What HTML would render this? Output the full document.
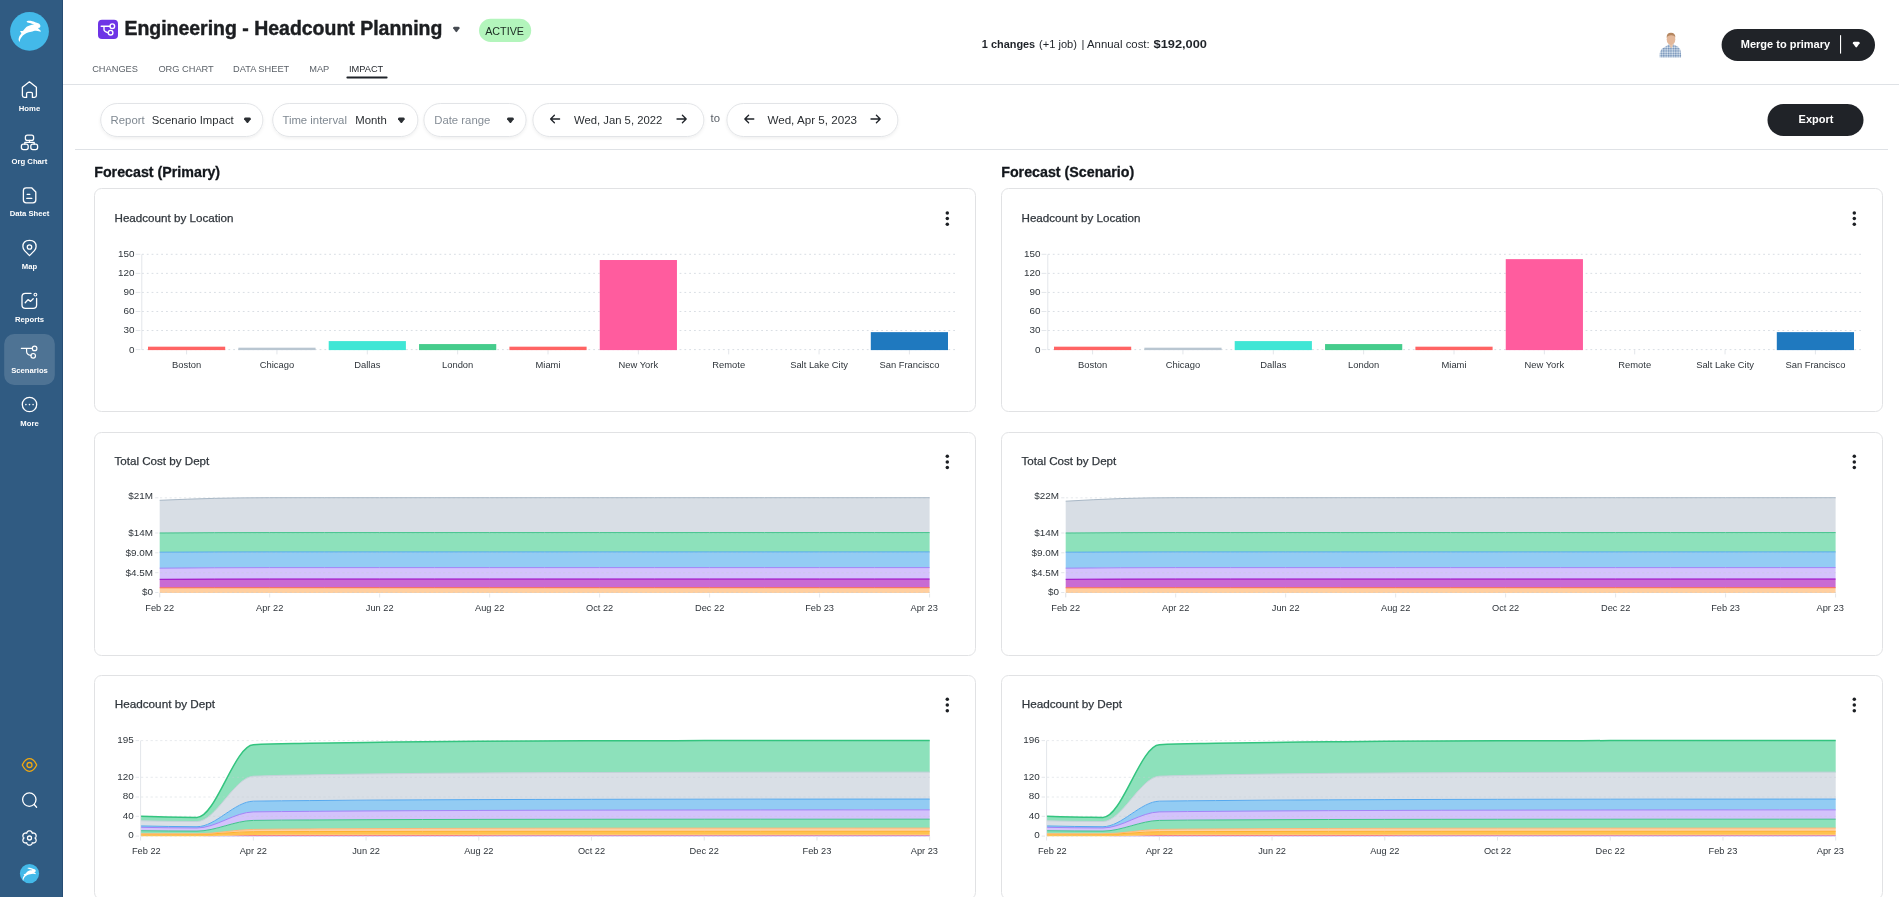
<!DOCTYPE html>
<html><head><meta charset="utf-8">
<style>
*{margin:0;padding:0}
html,body{width:1899px;height:897px;overflow:hidden;background:#fff}
svg{position:absolute;left:0;top:0;display:block;will-change:transform}
text{font-family:"Liberation Sans", sans-serif}
</style></head><body>
<svg width="1899" height="897" viewBox="0 0 1899 897">
<defs>
<filter id="sh" x="-10%" y="-30%" width="120%" height="170%"><feDropShadow dx="0" dy="1.5" stdDeviation="1.5" flood-color="#000" flood-opacity="0.06"/></filter>
</defs>

<rect x="0" y="0" width="63" height="897" fill="#305b82"/>
<rect x="62" y="0" width="1" height="897" fill="#274d74"/>
<circle cx="29.5" cy="31.4" r="19.4" fill="#43b9e9"/>
<path transform="translate(4,8) scale(1.0)" d="M15.19,33.51 C15.01,33.14 14.53,32.25 14.61,31.30 C14.69,30.36 15.19,28.84 15.65,27.83 C16.12,26.81 17.29,25.99 17.39,25.22 C17.49,24.44 15.94,23.60 16.23,23.19 C16.52,22.77 18.07,23.45 19.13,22.72 C20.19,22.00 21.26,19.81 22.61,18.84 C23.96,17.87 25.99,17.34 27.25,16.93 C28.50,16.51 30.84,16.80 30.14,16.35 C29.45,15.89 24.09,14.78 23.07,14.20 C22.06,13.62 23.17,13.03 24.06,12.87 C24.95,12.71 26.96,12.90 28.41,13.22 C29.86,13.54 31.61,14.36 32.75,14.78 C33.89,15.21 34.64,15.29 35.25,15.77 C35.86,16.25 36.31,17.04 36.41,17.68 C36.50,18.32 36.19,19.16 35.83,19.59 C35.46,20.03 34.14,19.86 34.20,20.29 C34.27,20.72 35.77,21.67 36.23,22.20 C36.70,22.73 37.23,23.29 36.99,23.48 C36.74,23.66 35.63,23.43 34.78,23.30 C33.93,23.18 33.14,22.67 31.88,22.72 C30.63,22.78 28.79,23.27 27.25,23.65 C25.70,24.04 24.01,24.40 22.61,25.04 C21.21,25.69 19.86,26.57 18.84,27.54 C17.83,28.50 17.05,29.85 16.52,30.84 C15.99,31.84 15.87,33.06 15.65,33.51 C15.43,33.95 15.36,33.87 15.19,33.51 Z" fill="#fff"/>
<path d="M22.4,87.2 L29.4,81.8 L36.4,87.2 L36.4,95.6 Q36.4,97.4 34.6,97.4 L32.4,97.4 L32.4,93.6 Q32.4,92.4 31.2,92.4 L27.8,92.4 Q26.6,92.4 26.6,93.6 L26.6,97.4 L24.2,97.4 Q22.4,97.4 22.4,95.6 Z" fill="none" stroke="#fff" stroke-width="1.3" stroke-linecap="round" stroke-linejoin="round"/>
<rect x="25.4" y="135.2" width="8.2" height="5.2" rx="2" fill="none" stroke="#fff" stroke-width="1.3" stroke-linecap="round" stroke-linejoin="round"/>
<path d="M29.5,140.4 L29.5,142.4 M25.4,142.4 L33.4,142.4 M24.8,142.4 L24.8,144.2 M34.2,142.4 L34.2,144.2" fill="none" stroke="#fff" stroke-width="1.3" stroke-linecap="round" stroke-linejoin="round"/>
<rect x="21.4" y="144.2" width="6.8" height="5.4" rx="2" fill="none" stroke="#fff" stroke-width="1.3" stroke-linecap="round" stroke-linejoin="round"/>
<rect x="30.8" y="144.2" width="6.8" height="5.4" rx="2" fill="none" stroke="#fff" stroke-width="1.3" stroke-linecap="round" stroke-linejoin="round"/>
<path d="M26.2,187.8 L31.6,187.8 L35.8,192.0 L35.8,200.0 Q35.8,202.8 33.0,202.8 L26.2,202.8 Q23.4,202.8 23.4,200.0 L23.4,190.6 Q23.4,187.8 26.2,187.8 Z" fill="none" stroke="#fff" stroke-width="1.3" stroke-linecap="round" stroke-linejoin="round"/>
<path d="M27.2,194.4 L29.8,194.4 M26.8,198.4 L31.8,198.4" fill="none" stroke="#fff" stroke-width="1.3" stroke-linecap="round" stroke-linejoin="round"/>
<path d="M29.5,255.6 L24.6,250.6 Q22.9,248.8 22.9,246.6 Q22.9,240.4 29.5,240.4 Q36.1,240.4 36.1,246.6 Q36.1,248.8 34.4,250.6 Z" fill="none" stroke="#fff" stroke-width="1.3" stroke-linecap="round" stroke-linejoin="round"/>
<circle cx="29.5" cy="247.0" r="2.2" fill="none" stroke="#fff" stroke-width="1.3" stroke-linecap="round" stroke-linejoin="round"/>
<path d="M31.0,293.4 L25.4,293.4 Q22.0,293.4 22.0,296.8 L22.0,305.0 Q22.0,308.4 25.4,308.4 L33.2,308.4 Q36.6,308.4 36.6,305.0 L36.6,298.4" fill="none" stroke="#fff" stroke-width="1.3" stroke-linecap="round" stroke-linejoin="round"/>
<circle cx="35.4" cy="294.6" r="1.4" fill="none" stroke="#fff" stroke-width="1.1"/>
<path d="M25.2,302.8 L28.0,299.6 L30.6,301.4 L33.2,298.8" fill="none" stroke="#fff" stroke-width="1.3" stroke-linecap="round" stroke-linejoin="round"/>
<rect x="4.2" y="334" width="50.6" height="51" rx="10" fill="#ffffff" fill-opacity="0.15"/>
<path d="M21.4,348.4 L32.2,348.4 M26.6,348.4 L26.6,351.4 Q26.6,354.6 31.0,355.4" fill="none" stroke="#fff" stroke-width="1.2" stroke-linecap="round" stroke-linejoin="round"/>
<circle cx="34.6" cy="348.4" r="2.3" fill="none" stroke="#fff" stroke-width="1.2" stroke-linecap="round" stroke-linejoin="round"/>
<circle cx="33.2" cy="355.8" r="2.3" fill="none" stroke="#fff" stroke-width="1.2" stroke-linecap="round" stroke-linejoin="round"/>
<circle cx="29.5" cy="404.5" r="7.2" fill="none" stroke="#fff" stroke-width="1.3" stroke-linecap="round" stroke-linejoin="round"/>
<circle cx="25.9" cy="404.6" r="0.8" fill="#fff"/>
<circle cx="29.5" cy="404.6" r="0.8" fill="#fff"/>
<circle cx="33.1" cy="404.6" r="0.8" fill="#fff"/>
<text x="29.50" y="111.00" font-size="7.7" fill="#ffffff" font-weight="700" text-anchor="middle" >Home</text>
<text x="29.50" y="163.70" font-size="7.7" fill="#ffffff" font-weight="700" text-anchor="middle" >Org Chart</text>
<text x="29.50" y="215.70" font-size="7.7" fill="#ffffff" font-weight="700" text-anchor="middle" >Data Sheet</text>
<text x="29.50" y="269.00" font-size="7.7" fill="#ffffff" font-weight="700" text-anchor="middle" >Map</text>
<text x="29.50" y="321.70" font-size="7.7" fill="#ffffff" font-weight="700" text-anchor="middle" >Reports</text>
<text x="29.50" y="372.80" font-size="7.7" fill="#ffffff" font-weight="700" text-anchor="middle" >Scenarios</text>
<text x="29.50" y="426.00" font-size="7.7" fill="#ffffff" font-weight="700" text-anchor="middle" >More</text>
<path d="M22.3,765 C24.4,760.6 26.8,758.7 29.5,758.7 C32.2,758.7 34.6,760.6 36.7,765 C34.6,769.4 32.2,771.3 29.5,771.3 C26.8,771.3 24.4,769.4 22.3,765 Z" fill="none" stroke="#f1a80f" stroke-width="1.3" stroke-linejoin="round"/>
<circle cx="29.5" cy="765" r="2.5" fill="none" stroke="#f1a80f" stroke-width="1.3"/>
<circle cx="29.3" cy="799.6" r="6.7" fill="none" stroke="#fff" stroke-width="1.3" stroke-linecap="round" stroke-linejoin="round"/>
<path d="M34.2,804.5 L36.6,807.2" fill="none" stroke="#fff" stroke-width="1.3" stroke-linecap="round" stroke-linejoin="round"/>
<path d="M29.50,830.80 L29.75,830.81 L30.00,830.85 L30.25,830.91 L30.49,830.99 L30.72,831.09 L30.94,831.22 L31.15,831.36 L31.36,831.53 L31.54,831.71 L31.72,831.91 L31.87,832.13 L32.01,832.37 L32.12,832.62 L32.21,832.90 L32.25,833.24 L32.56,833.10 L32.85,833.04 L33.12,833.01 L33.40,833.01 L33.66,833.04 L33.92,833.09 L34.18,833.16 L34.42,833.25 L34.65,833.36 L34.87,833.49 L35.08,833.64 L35.27,833.81 L35.44,833.99 L35.60,834.19 L35.74,834.40 L35.85,834.62 L35.94,834.86 L36.02,835.10 L36.07,835.35 L36.09,835.60 L36.10,835.86 L36.08,836.11 L36.03,836.37 L35.97,836.63 L35.88,836.88 L35.77,837.12 L35.63,837.36 L35.47,837.58 L35.28,837.80 L35.00,838.00 L35.28,838.20 L35.47,838.42 L35.63,838.64 L35.77,838.88 L35.88,839.12 L35.97,839.37 L36.03,839.63 L36.08,839.89 L36.10,840.14 L36.09,840.40 L36.07,840.65 L36.02,840.90 L35.94,841.14 L35.85,841.38 L35.74,841.60 L35.60,841.81 L35.44,842.01 L35.27,842.19 L35.08,842.36 L34.87,842.51 L34.65,842.64 L34.42,842.75 L34.18,842.84 L33.92,842.91 L33.66,842.96 L33.40,842.99 L33.12,842.99 L32.85,842.96 L32.56,842.90 L32.25,842.76 L32.21,843.10 L32.12,843.38 L32.01,843.63 L31.87,843.87 L31.72,844.09 L31.54,844.29 L31.36,844.47 L31.15,844.64 L30.94,844.78 L30.72,844.91 L30.49,845.01 L30.25,845.09 L30.00,845.15 L29.75,845.19 L29.50,845.20 L29.25,845.19 L29.00,845.15 L28.75,845.09 L28.51,845.01 L28.28,844.91 L28.06,844.78 L27.85,844.64 L27.64,844.47 L27.46,844.29 L27.28,844.09 L27.13,843.87 L26.99,843.63 L26.88,843.38 L26.79,843.10 L26.75,842.76 L26.44,842.90 L26.15,842.96 L25.88,842.99 L25.60,842.99 L25.34,842.96 L25.08,842.91 L24.82,842.84 L24.58,842.75 L24.35,842.64 L24.13,842.51 L23.92,842.36 L23.73,842.19 L23.56,842.01 L23.40,841.81 L23.26,841.60 L23.15,841.38 L23.06,841.14 L22.98,840.90 L22.93,840.65 L22.91,840.40 L22.90,840.14 L22.92,839.89 L22.97,839.63 L23.03,839.37 L23.12,839.12 L23.23,838.88 L23.37,838.64 L23.53,838.42 L23.72,838.20 L24.00,838.00 L23.72,837.80 L23.53,837.58 L23.37,837.36 L23.23,837.12 L23.12,836.88 L23.03,836.63 L22.97,836.37 L22.92,836.11 L22.90,835.86 L22.91,835.60 L22.93,835.35 L22.98,835.10 L23.06,834.86 L23.15,834.62 L23.26,834.40 L23.40,834.19 L23.56,833.99 L23.73,833.81 L23.92,833.64 L24.13,833.49 L24.35,833.36 L24.58,833.25 L24.82,833.16 L25.08,833.09 L25.34,833.04 L25.60,833.01 L25.88,833.01 L26.15,833.04 L26.44,833.10 L26.75,833.24 L26.79,832.90 L26.88,832.62 L26.99,832.37 L27.13,832.13 L27.28,831.91 L27.46,831.71 L27.64,831.53 L27.85,831.36 L28.06,831.22 L28.28,831.09 L28.51,830.99 L28.75,830.91 L29.00,830.85 L29.25,830.81 L29.50,830.80 Z" fill="none" stroke="#fff" stroke-width="1.3" stroke-linecap="round" stroke-linejoin="round"/>
<circle cx="29.5" cy="838.0" r="2.0" fill="none" stroke="#fff" stroke-width="1.3" stroke-linecap="round" stroke-linejoin="round"/>
<circle cx="29.5" cy="873.6" r="9.6" fill="#43b9e9"/>
<path transform="translate(13.9,860.1) scale(0.6)" d="M15.19,33.51 C15.01,33.14 14.53,32.25 14.61,31.30 C14.69,30.36 15.19,28.84 15.65,27.83 C16.12,26.81 17.29,25.99 17.39,25.22 C17.49,24.44 15.94,23.60 16.23,23.19 C16.52,22.77 18.07,23.45 19.13,22.72 C20.19,22.00 21.26,19.81 22.61,18.84 C23.96,17.87 25.99,17.34 27.25,16.93 C28.50,16.51 30.84,16.80 30.14,16.35 C29.45,15.89 24.09,14.78 23.07,14.20 C22.06,13.62 23.17,13.03 24.06,12.87 C24.95,12.71 26.96,12.90 28.41,13.22 C29.86,13.54 31.61,14.36 32.75,14.78 C33.89,15.21 34.64,15.29 35.25,15.77 C35.86,16.25 36.31,17.04 36.41,17.68 C36.50,18.32 36.19,19.16 35.83,19.59 C35.46,20.03 34.14,19.86 34.20,20.29 C34.27,20.72 35.77,21.67 36.23,22.20 C36.70,22.73 37.23,23.29 36.99,23.48 C36.74,23.66 35.63,23.43 34.78,23.30 C33.93,23.18 33.14,22.67 31.88,22.72 C30.63,22.78 28.79,23.27 27.25,23.65 C25.70,24.04 24.01,24.40 22.61,25.04 C21.21,25.69 19.86,26.57 18.84,27.54 C17.83,28.50 17.05,29.85 16.52,30.84 C15.99,31.84 15.87,33.06 15.65,33.51 C15.43,33.95 15.36,33.87 15.19,33.51 Z" fill="#fff"/>
<rect x="63" y="84" width="1836" height="1" fill="#dfe2e6"/>
<rect x="98" y="19.8" width="20" height="19.2" rx="4" fill="#6e34e6"/>
<path d="M101.2,26.2 L110.0,26.2 M104.0,26.2 L104.0,29.4 Q104.0,31.4 108.4,32.8" fill="none" stroke="#fff" stroke-width="1.4" stroke-linecap="round" stroke-linejoin="round"/>
<circle cx="112.3" cy="26.2" r="2.3" fill="none" stroke="#fff" stroke-width="1.4" stroke-linecap="round" stroke-linejoin="round"/>
<circle cx="110.6" cy="32.7" r="2.3" fill="none" stroke="#fff" stroke-width="1.4" stroke-linecap="round" stroke-linejoin="round"/>
<text x="124.40" y="35.00" font-size="19.5" fill="#1c1e21" font-weight="700" text-anchor="start" textLength="318" lengthAdjust="spacingAndGlyphs" stroke="#1c1e21" stroke-width="0.45">Engineering - Headcount Planning</text>
<path d="M454.28,26.80 L458.42,26.80 Q460.00,26.80 459.55,28.32 L457.05,31.80 Q456.35,32.60 455.65,31.80 L453.15,28.32 Q452.70,26.80 454.28,26.80 Z" fill="#464b52"/>
<rect x="479" y="18.8" width="52.2" height="23.2" rx="11.6" fill="#b3f5bc"/>
<text x="485.20" y="34.70" font-size="10.75" fill="#1b2a22" font-weight="400" text-anchor="start" >ACTIVE</text>
<text x="92.20" y="72.10" font-size="9.25" fill="#5b6168" font-weight="400" text-anchor="start" >CHANGES</text>
<text x="158.40" y="72.10" font-size="9.25" fill="#5b6168" font-weight="400" text-anchor="start" >ORG CHART</text>
<text x="233.00" y="72.10" font-size="9.25" fill="#5b6168" font-weight="400" text-anchor="start" >DATA SHEET</text>
<text x="309.20" y="72.10" font-size="9.25" fill="#5b6168" font-weight="400" text-anchor="start" >MAP</text>
<text x="349.00" y="72.10" font-size="9.25" fill="#1f2329" font-weight="400" text-anchor="start" >IMPACT</text>
<rect x="346.4" y="76.6" width="41.2" height="1.8" rx="0.9" fill="#1f2329"/>
<text x="981.80" y="47.80" font-size="11" fill="#1f2329" font-weight="700" text-anchor="start" textLength="53.4" lengthAdjust="spacingAndGlyphs">1 changes</text>
<text x="1039.00" y="47.80" font-size="11.2" fill="#1f2329" font-weight="400" text-anchor="start" textLength="38" lengthAdjust="spacingAndGlyphs">(+1 job)</text>
<text x="1081.40" y="47.80" font-size="11.2" fill="#1f2329" font-weight="400" text-anchor="start" >|</text>
<text x="1087.00" y="47.80" font-size="11.2" fill="#1f2329" font-weight="400" text-anchor="start" textLength="62.7" lengthAdjust="spacingAndGlyphs">Annual cost:</text>
<text x="1153.60" y="47.80" font-size="11" fill="#1f2329" font-weight="700" text-anchor="start" textLength="53.4" lengthAdjust="spacingAndGlyphs">$192,000</text>
<defs><pattern id="chk" width="2.4" height="2.4" patternUnits="userSpaceOnUse"><rect width="2.4" height="2.4" fill="#a9bed6"/><rect width="1.2" height="1.2" fill="#6f8db5"/><rect x="1.2" y="1.2" width="1.2" height="1.2" fill="#dfe8f1"/></pattern></defs>
<path d="M1659.6,57.6 Q1659.0,51.0 1662.4,48.6 Q1665.6,46.4 1668.6,44.6 L1673.6,44.6 Q1677.6,46.2 1679.6,48.6 Q1681.4,51.4 1681.0,57.6 Z" fill="url(#chk)"/>
<path d="M1669.2,44.4 L1671.2,48.6 L1673.6,44.6 Z" fill="#e6c3a9"/>
<ellipse cx="1671.0" cy="39.2" rx="4.3" ry="5.9" fill="#e3b89a"/>
<path d="M1666.6,38.0 Q1666.4,32.8 1671.0,32.8 Q1675.4,32.8 1675.4,37.6 Q1674.2,35.0 1671.0,35.2 Q1667.8,35.2 1666.6,38.0 Z" fill="#b4865f"/>
<rect x="1721.6" y="29" width="153.4" height="32" rx="16" fill="#202328"/>
<text x="1740.80" y="48.30" font-size="11" fill="#ffffff" font-weight="700" text-anchor="start" >Merge to primary</text>
<rect x="1840" y="35.2" width="1.1" height="18.4" fill="#ffffff"/>
<path d="M1854.06,41.70 L1858.44,41.70 Q1860.10,41.70 1859.65,43.31 L1856.95,47.10 Q1856.25,47.90 1855.55,47.10 L1852.85,43.31 Q1852.40,41.70 1854.06,41.70 Z" fill="#ffffff"/>
<rect x="100.7" y="103.5" width="162.2" height="33" rx="16.5" fill="#fff" stroke="#e2e4e7" stroke-width="1" filter="url(#sh)"/>
<text x="110.60" y="124.00" font-size="11.35" fill="#7f8891" font-weight="400" text-anchor="start" >Report</text>
<text x="151.80" y="124.00" font-size="11.35" fill="#2b2f33" font-weight="400" text-anchor="start" >Scenario Impact</text>
<path d="M245.32,117.60 L249.58,117.60 Q251.20,117.60 250.75,119.16 L248.15,122.70 Q247.45,123.50 246.75,122.70 L244.15,119.16 Q243.70,117.60 245.32,117.60 Z" fill="#2b2f33"/>
<rect x="272.7" y="103.5" width="145.2" height="33" rx="16.5" fill="#fff" stroke="#e2e4e7" stroke-width="1" filter="url(#sh)"/>
<text x="282.40" y="124.00" font-size="11.35" fill="#7f8891" font-weight="400" text-anchor="start" >Time interval</text>
<text x="355.20" y="124.00" font-size="11.35" fill="#2b2f33" font-weight="400" text-anchor="start" >Month</text>
<path d="M399.22,117.60 L403.48,117.60 Q405.10,117.60 404.65,119.16 L402.05,122.70 Q401.35,123.50 400.65,122.70 L398.05,119.16 Q397.60,117.60 399.22,117.60 Z" fill="#2b2f33"/>
<rect x="423.9" y="103.5" width="102.2" height="33" rx="16.5" fill="#fff" stroke="#e2e4e7" stroke-width="1" filter="url(#sh)"/>
<text x="434.20" y="124.00" font-size="11.35" fill="#858d96" font-weight="400" text-anchor="start" >Date range</text>
<path d="M508.32,117.60 L512.58,117.60 Q514.20,117.60 513.75,119.16 L511.15,122.70 Q510.45,123.50 509.75,122.70 L507.15,119.16 Q506.70,117.60 508.32,117.60 Z" fill="#2b2f33"/>
<rect x="532.9" y="103.5" width="171.0" height="33" rx="16.5" fill="#fff" stroke="#e2e4e7" stroke-width="1" filter="url(#sh)"/>
<path d="M559.6,119.0 L550.6,119.0 M554.4,115.2 L550.6,119.0 L554.4,122.8" fill="none" stroke="#1f2329" stroke-width="1.3" stroke-linecap="round" stroke-linejoin="round"/>
<path d="M677.0,119.0 L686.2,119.0 M682.4,115.2 L686.2,119.0 L682.4,122.8" fill="none" stroke="#1f2329" stroke-width="1.3" stroke-linecap="round" stroke-linejoin="round"/>
<text x="574.00" y="124.00" font-size="11.3" fill="#2b2f33" font-weight="400" text-anchor="start" textLength="88.3" lengthAdjust="spacingAndGlyphs">Wed, Jan 5, 2022</text>
<text x="710.60" y="121.60" font-size="11.3" fill="#5b6168" font-weight="400" text-anchor="start" >to</text>
<rect x="726.9" y="103.5" width="171.0" height="33" rx="16.5" fill="#fff" stroke="#e2e4e7" stroke-width="1" filter="url(#sh)"/>
<path d="M753.8000000000001,119.0 L744.8000000000001,119.0 M748.6,115.2 L744.8000000000001,119.0 L748.6,122.8" fill="none" stroke="#1f2329" stroke-width="1.3" stroke-linecap="round" stroke-linejoin="round"/>
<path d="M871.0,119.0 L880.2,119.0 M876.4,115.2 L880.2,119.0 L876.4,122.8" fill="none" stroke="#1f2329" stroke-width="1.3" stroke-linecap="round" stroke-linejoin="round"/>
<text x="767.40" y="124.00" font-size="11.3" fill="#2b2f33" font-weight="400" text-anchor="start" textLength="89.7" lengthAdjust="spacingAndGlyphs">Wed, Apr 5, 2023</text>
<rect x="1767.5" y="104" width="96" height="32" rx="16" fill="#202328"/>
<text x="1798.60" y="123.40" font-size="11" fill="#ffffff" font-weight="700" text-anchor="start" >Export</text>
<rect x="75" y="149" width="1813" height="1" fill="#dfe2e6"/>
<text x="94.20" y="177.20" font-size="14.26" fill="#13171c" font-weight="700" text-anchor="start" stroke="#13171c" stroke-width="0.3">Forecast (Primary)</text>
<text x="1001.20" y="177.20" font-size="14.26" fill="#13171c" font-weight="700" text-anchor="start" stroke="#13171c" stroke-width="0.3">Forecast (Scenario)</text>
<rect x="94.5" y="188.5" width="881" height="223" rx="7" fill="#fff" stroke="#e1e2e4" stroke-width="1"/>
<text x="114.50" y="222.40" font-size="11.6" fill="#30363c" font-weight="400" text-anchor="start" stroke="#30363c" stroke-width="0.25" textLength="119" lengthAdjust="spacingAndGlyphs">Headcount by Location</text>
<circle cx="947.3" cy="212.90" r="1.75" fill="#1c1f23"/>
<circle cx="947.3" cy="218.60" r="1.75" fill="#1c1f23"/>
<circle cx="947.3" cy="224.30" r="1.75" fill="#1c1f23"/>
<line x1="142" y1="254.31" x2="955" y2="254.31" stroke="#d9dee4" stroke-width="1" stroke-dasharray="1.8,3"/>
<line x1="135.6" y1="254.31" x2="140.4" y2="254.31" stroke="#e3e6ea" stroke-width="1"/>
<text x="134.60" y="257.20" font-size="9.9" fill="#2f353b" font-weight="400" text-anchor="end" >150</text>
<line x1="142" y1="273.36" x2="955" y2="273.36" stroke="#d9dee4" stroke-width="1" stroke-dasharray="1.8,3"/>
<line x1="135.6" y1="273.36" x2="140.4" y2="273.36" stroke="#e3e6ea" stroke-width="1"/>
<text x="134.60" y="276.26" font-size="9.9" fill="#2f353b" font-weight="400" text-anchor="end" >120</text>
<line x1="142" y1="292.42" x2="955" y2="292.42" stroke="#d9dee4" stroke-width="1" stroke-dasharray="1.8,3"/>
<line x1="135.6" y1="292.42" x2="140.4" y2="292.42" stroke="#e3e6ea" stroke-width="1"/>
<text x="134.60" y="295.32" font-size="9.9" fill="#2f353b" font-weight="400" text-anchor="end" >90</text>
<line x1="142" y1="311.48" x2="955" y2="311.48" stroke="#d9dee4" stroke-width="1" stroke-dasharray="1.8,3"/>
<line x1="135.6" y1="311.48" x2="140.4" y2="311.48" stroke="#e3e6ea" stroke-width="1"/>
<text x="134.60" y="314.38" font-size="9.9" fill="#2f353b" font-weight="400" text-anchor="end" >60</text>
<line x1="142" y1="330.54" x2="955" y2="330.54" stroke="#d9dee4" stroke-width="1" stroke-dasharray="1.8,3"/>
<line x1="135.6" y1="330.54" x2="140.4" y2="330.54" stroke="#e3e6ea" stroke-width="1"/>
<text x="134.60" y="333.44" font-size="9.9" fill="#2f353b" font-weight="400" text-anchor="end" >30</text>
<line x1="142" y1="349.60" x2="955" y2="349.60" stroke="#d9dee4" stroke-width="1" stroke-dasharray="1.8,3"/>
<line x1="135.6" y1="349.60" x2="140.4" y2="349.60" stroke="#e3e6ea" stroke-width="1"/>
<text x="134.60" y="352.50" font-size="9.9" fill="#2f353b" font-weight="400" text-anchor="end" >0</text>
<line x1="141.8" y1="254.31" x2="141.8" y2="350.00" stroke="#e3e6ea" stroke-width="1"/>
<line x1="186.60" y1="350.10" x2="186.60" y2="354.40" stroke="#e3e6ea" stroke-width="1"/>
<rect x="148.00" y="346.68" width="77.2" height="3.42" fill="#ff6464"/>
<text x="186.60" y="368.20" font-size="9.4" fill="#2f353b" font-weight="400" text-anchor="middle" >Boston</text>
<line x1="276.95" y1="350.10" x2="276.95" y2="354.40" stroke="#e3e6ea" stroke-width="1"/>
<rect x="238.35" y="347.69" width="77.2" height="2.41" fill="#b9c6d1"/>
<text x="276.95" y="368.20" font-size="9.4" fill="#2f353b" font-weight="400" text-anchor="middle" >Chicago</text>
<line x1="367.30" y1="350.10" x2="367.30" y2="354.40" stroke="#e3e6ea" stroke-width="1"/>
<rect x="328.70" y="341.09" width="77.2" height="9.01" fill="#40e6d5"/>
<text x="367.30" y="368.20" font-size="9.4" fill="#2f353b" font-weight="400" text-anchor="middle" >Dallas</text>
<line x1="457.65" y1="350.10" x2="457.65" y2="354.40" stroke="#e3e6ea" stroke-width="1"/>
<rect x="419.05" y="344.07" width="77.2" height="6.03" fill="#45cc8c"/>
<text x="457.65" y="368.20" font-size="9.4" fill="#2f353b" font-weight="400" text-anchor="middle" >London</text>
<line x1="548.00" y1="350.10" x2="548.00" y2="354.40" stroke="#e3e6ea" stroke-width="1"/>
<rect x="509.40" y="346.68" width="77.2" height="3.42" fill="#ff6464"/>
<text x="548.00" y="368.20" font-size="9.4" fill="#2f353b" font-weight="400" text-anchor="middle" >Miami</text>
<line x1="638.35" y1="350.10" x2="638.35" y2="354.40" stroke="#e3e6ea" stroke-width="1"/>
<rect x="599.75" y="260.02" width="77.2" height="90.08" fill="#ff5c9e"/>
<text x="638.35" y="368.20" font-size="9.4" fill="#2f353b" font-weight="400" text-anchor="middle" >New York</text>
<line x1="728.70" y1="350.10" x2="728.70" y2="354.40" stroke="#e3e6ea" stroke-width="1"/>
<text x="728.70" y="368.20" font-size="9.4" fill="#2f353b" font-weight="400" text-anchor="middle" >Remote</text>
<line x1="819.05" y1="350.10" x2="819.05" y2="354.40" stroke="#e3e6ea" stroke-width="1"/>
<text x="819.05" y="368.20" font-size="9.4" fill="#2f353b" font-weight="400" text-anchor="middle" >Salt Lake City</text>
<line x1="909.40" y1="350.10" x2="909.40" y2="354.40" stroke="#e3e6ea" stroke-width="1"/>
<rect x="870.80" y="332.13" width="77.2" height="17.97" fill="#1f79bf"/>
<text x="909.40" y="368.20" font-size="9.4" fill="#2f353b" font-weight="400" text-anchor="middle" >San Francisco</text>
<rect x="94.5" y="432.5" width="881" height="223" rx="7" fill="#fff" stroke="#e1e2e4" stroke-width="1"/>
<text x="114.50" y="465.40" font-size="11.6" fill="#30363c" font-weight="400" text-anchor="start" stroke="#30363c" stroke-width="0.25" textLength="94.8" lengthAdjust="spacingAndGlyphs">Total Cost by Dept</text>
<circle cx="947.3" cy="456.20" r="1.75" fill="#1c1f23"/>
<circle cx="947.3" cy="461.90" r="1.75" fill="#1c1f23"/>
<circle cx="947.3" cy="467.60" r="1.75" fill="#1c1f23"/>
<path d="M159.70,587.80 C178.03,587.77 196.36,587.74 214.69,587.73 C233.02,587.71 251.35,587.70 269.69,587.70 C288.02,587.70 306.35,587.70 324.68,587.70 C343.01,587.70 361.34,587.70 379.67,587.70 C398.00,587.70 416.33,587.70 434.66,587.70 C453.00,587.70 471.33,587.70 489.66,587.70 C507.99,587.70 526.32,587.70 544.65,587.70 C562.98,587.70 581.31,587.70 599.64,587.70 C617.97,587.70 636.30,587.70 654.64,587.70 C672.97,587.70 691.30,587.70 709.63,587.70 C727.96,587.70 746.29,587.70 764.62,587.70 C782.95,587.70 801.28,587.70 819.61,587.70 C837.95,587.70 856.28,587.70 874.61,587.70 C892.94,587.70 911.27,587.70 929.60,587.70 L929.60,593.00 C911.27,593.00 892.94,593.00 874.61,593.00 C856.28,593.00 837.95,593.00 819.61,593.00 C801.28,593.00 782.95,593.00 764.62,593.00 C746.29,593.00 727.96,593.00 709.63,593.00 C691.30,593.00 672.97,593.00 654.64,593.00 C636.30,593.00 617.97,593.00 599.64,593.00 C581.31,593.00 562.98,593.00 544.65,593.00 C526.32,593.00 507.99,593.00 489.66,593.00 C471.33,593.00 453.00,593.00 434.66,593.00 C416.33,593.00 398.00,593.00 379.67,593.00 C361.34,593.00 343.01,593.00 324.68,593.00 C306.35,593.00 288.02,593.00 269.69,593.00 C251.35,593.00 233.02,593.00 214.69,593.00 C196.36,593.00 178.03,593.00 159.70,593.00 Z" fill="#ffcf9f"/>
<path d="M159.70,579.30 C178.03,579.21 196.36,579.12 214.69,579.08 C233.02,579.03 251.35,579.00 269.69,579.00 C288.02,579.00 306.35,579.00 324.68,579.00 C343.01,579.00 361.34,579.00 379.67,579.00 C398.00,579.00 416.33,579.00 434.66,579.00 C453.00,579.00 471.33,579.00 489.66,579.00 C507.99,579.00 526.32,579.00 544.65,579.00 C562.98,579.00 581.31,579.00 599.64,579.00 C617.97,579.00 636.30,579.00 654.64,579.00 C672.97,579.00 691.30,579.00 709.63,579.00 C727.96,579.00 746.29,579.00 764.62,579.00 C782.95,579.00 801.28,579.00 819.61,579.00 C837.95,579.00 856.28,579.00 874.61,579.00 C892.94,579.00 911.27,579.00 929.60,579.00 L929.60,587.70 C911.27,587.70 892.94,587.70 874.61,587.70 C856.28,587.70 837.95,587.70 819.61,587.70 C801.28,587.70 782.95,587.70 764.62,587.70 C746.29,587.70 727.96,587.70 709.63,587.70 C691.30,587.70 672.97,587.70 654.64,587.70 C636.30,587.70 617.97,587.70 599.64,587.70 C581.31,587.70 562.98,587.70 544.65,587.70 C526.32,587.70 507.99,587.70 489.66,587.70 C471.33,587.70 453.00,587.70 434.66,587.70 C416.33,587.70 398.00,587.70 379.67,587.70 C361.34,587.70 343.01,587.70 324.68,587.70 C306.35,587.70 288.02,587.70 269.69,587.70 C251.35,587.70 233.02,587.71 214.69,587.73 C196.36,587.74 178.03,587.77 159.70,587.80 Z" fill="#c96bd2"/>
<path d="M159.70,568.20 C178.03,568.03 196.36,567.85 214.69,567.75 C233.02,567.65 251.35,567.60 269.69,567.60 C288.02,567.60 306.35,567.60 324.68,567.60 C343.01,567.60 361.34,567.60 379.67,567.60 C398.00,567.60 416.33,567.60 434.66,567.60 C453.00,567.60 471.33,567.60 489.66,567.60 C507.99,567.60 526.32,567.60 544.65,567.60 C562.98,567.60 581.31,567.60 599.64,567.60 C617.97,567.60 636.30,567.60 654.64,567.60 C672.97,567.60 691.30,567.60 709.63,567.60 C727.96,567.60 746.29,567.60 764.62,567.60 C782.95,567.60 801.28,567.60 819.61,567.60 C837.95,567.60 856.28,567.60 874.61,567.60 C892.94,567.60 911.27,567.60 929.60,567.60 L929.60,579.00 C911.27,579.00 892.94,579.00 874.61,579.00 C856.28,579.00 837.95,579.00 819.61,579.00 C801.28,579.00 782.95,579.00 764.62,579.00 C746.29,579.00 727.96,579.00 709.63,579.00 C691.30,579.00 672.97,579.00 654.64,579.00 C636.30,579.00 617.97,579.00 599.64,579.00 C581.31,579.00 562.98,579.00 544.65,579.00 C526.32,579.00 507.99,579.00 489.66,579.00 C471.33,579.00 453.00,579.00 434.66,579.00 C416.33,579.00 398.00,579.00 379.67,579.00 C361.34,579.00 343.01,579.00 324.68,579.00 C306.35,579.00 288.02,579.00 269.69,579.00 C251.35,579.00 233.02,579.03 214.69,579.08 C196.36,579.12 178.03,579.21 159.70,579.30 Z" fill="#d4c2fc"/>
<path d="M159.70,552.20 C178.03,552.11 196.36,552.02 214.69,551.97 C233.02,551.92 251.35,551.90 269.69,551.90 C288.02,551.90 306.35,551.90 324.68,551.90 C343.01,551.90 361.34,551.90 379.67,551.90 C398.00,551.90 416.33,551.90 434.66,551.90 C453.00,551.90 471.33,551.90 489.66,551.90 C507.99,551.90 526.32,551.90 544.65,551.90 C562.98,551.90 581.31,551.90 599.64,551.90 C617.97,551.90 636.30,551.90 654.64,551.90 C672.97,551.90 691.30,551.90 709.63,551.90 C727.96,551.90 746.29,551.90 764.62,551.90 C782.95,551.90 801.28,551.90 819.61,551.90 C837.95,551.90 856.28,551.90 874.61,551.90 C892.94,551.90 911.27,551.90 929.60,551.90 L929.60,567.60 C911.27,567.60 892.94,567.60 874.61,567.60 C856.28,567.60 837.95,567.60 819.61,567.60 C801.28,567.60 782.95,567.60 764.62,567.60 C746.29,567.60 727.96,567.60 709.63,567.60 C691.30,567.60 672.97,567.60 654.64,567.60 C636.30,567.60 617.97,567.60 599.64,567.60 C581.31,567.60 562.98,567.60 544.65,567.60 C526.32,567.60 507.99,567.60 489.66,567.60 C471.33,567.60 453.00,567.60 434.66,567.60 C416.33,567.60 398.00,567.60 379.67,567.60 C361.34,567.60 343.01,567.60 324.68,567.60 C306.35,567.60 288.02,567.60 269.69,567.60 C251.35,567.60 233.02,567.65 214.69,567.75 C196.36,567.85 178.03,568.03 159.70,568.20 Z" fill="#93ccf4"/>
<path d="M159.70,533.00 C178.03,532.88 196.36,532.77 214.69,532.70 C233.02,532.63 251.35,532.60 269.69,532.60 C288.02,532.60 306.35,532.60 324.68,532.60 C343.01,532.60 361.34,532.60 379.67,532.60 C398.00,532.60 416.33,532.60 434.66,532.60 C453.00,532.60 471.33,532.60 489.66,532.60 C507.99,532.60 526.32,532.60 544.65,532.60 C562.98,532.60 581.31,532.60 599.64,532.60 C617.97,532.60 636.30,532.60 654.64,532.60 C672.97,532.60 691.30,532.60 709.63,532.60 C727.96,532.60 746.29,532.60 764.62,532.60 C782.95,532.60 801.28,532.60 819.61,532.60 C837.95,532.60 856.28,532.60 874.61,532.60 C892.94,532.60 911.27,532.60 929.60,532.60 L929.60,551.90 C911.27,551.90 892.94,551.90 874.61,551.90 C856.28,551.90 837.95,551.90 819.61,551.90 C801.28,551.90 782.95,551.90 764.62,551.90 C746.29,551.90 727.96,551.90 709.63,551.90 C691.30,551.90 672.97,551.90 654.64,551.90 C636.30,551.90 617.97,551.90 599.64,551.90 C581.31,551.90 562.98,551.90 544.65,551.90 C526.32,551.90 507.99,551.90 489.66,551.90 C471.33,551.90 453.00,551.90 434.66,551.90 C416.33,551.90 398.00,551.90 379.67,551.90 C361.34,551.90 343.01,551.90 324.68,551.90 C306.35,551.90 288.02,551.90 269.69,551.90 C251.35,551.90 233.02,551.92 214.69,551.97 C196.36,552.02 178.03,552.11 159.70,552.20 Z" fill="#8de1bb"/>
<path d="M159.70,500.30 C178.03,499.54 196.36,498.78 214.69,498.35 C233.02,497.92 251.35,497.70 269.69,497.70 C288.02,497.70 306.35,497.70 324.68,497.70 C343.01,497.70 361.34,497.70 379.67,497.70 C398.00,497.70 416.33,497.70 434.66,497.70 C453.00,497.70 471.33,497.70 489.66,497.70 C507.99,497.70 526.32,497.70 544.65,497.70 C562.98,497.70 581.31,497.70 599.64,497.70 C617.97,497.70 636.30,497.70 654.64,497.70 C672.97,497.70 691.30,497.70 709.63,497.70 C727.96,497.70 746.29,497.70 764.62,497.70 C782.95,497.70 801.28,497.70 819.61,497.70 C837.95,497.70 856.28,497.70 874.61,497.70 C892.94,497.70 911.27,497.70 929.60,497.70 L929.60,532.60 C911.27,532.60 892.94,532.60 874.61,532.60 C856.28,532.60 837.95,532.60 819.61,532.60 C801.28,532.60 782.95,532.60 764.62,532.60 C746.29,532.60 727.96,532.60 709.63,532.60 C691.30,532.60 672.97,532.60 654.64,532.60 C636.30,532.60 617.97,532.60 599.64,532.60 C581.31,532.60 562.98,532.60 544.65,532.60 C526.32,532.60 507.99,532.60 489.66,532.60 C471.33,532.60 453.00,532.60 434.66,532.60 C416.33,532.60 398.00,532.60 379.67,532.60 C361.34,532.60 343.01,532.60 324.68,532.60 C306.35,532.60 288.02,532.60 269.69,532.60 C251.35,532.60 233.02,532.63 214.69,532.70 C196.36,532.77 178.03,532.88 159.70,533.00 Z" fill="#d8dee5"/>
<line x1="160" y1="497.80" x2="930" y2="497.80" stroke="#c5ccd4" stroke-opacity="0.42" stroke-width="1" stroke-dasharray="2.2,2.6"/>
<line x1="160" y1="533.00" x2="930" y2="533.00" stroke="#c5ccd4" stroke-opacity="0.42" stroke-width="1" stroke-dasharray="2.2,2.6"/>
<line x1="160" y1="552.80" x2="930" y2="552.80" stroke="#c5ccd4" stroke-opacity="0.42" stroke-width="1" stroke-dasharray="2.2,2.6"/>
<line x1="160" y1="572.70" x2="930" y2="572.70" stroke="#c5ccd4" stroke-opacity="0.42" stroke-width="1" stroke-dasharray="2.2,2.6"/>
<line x1="160" y1="592.50" x2="930" y2="592.50" stroke="#c5ccd4" stroke-opacity="0.42" stroke-width="1" stroke-dasharray="2.2,2.6"/>
<path d="M159.70,587.80 C178.03,587.77 196.36,587.74 214.69,587.73 C233.02,587.71 251.35,587.70 269.69,587.70 C288.02,587.70 306.35,587.70 324.68,587.70 C343.01,587.70 361.34,587.70 379.67,587.70 C398.00,587.70 416.33,587.70 434.66,587.70 C453.00,587.70 471.33,587.70 489.66,587.70 C507.99,587.70 526.32,587.70 544.65,587.70 C562.98,587.70 581.31,587.70 599.64,587.70 C617.97,587.70 636.30,587.70 654.64,587.70 C672.97,587.70 691.30,587.70 709.63,587.70 C727.96,587.70 746.29,587.70 764.62,587.70 C782.95,587.70 801.28,587.70 819.61,587.70 C837.95,587.70 856.28,587.70 874.61,587.70 C892.94,587.70 911.27,587.70 929.60,587.70" fill="none" stroke="#ff6d4d" stroke-width="1"/>
<path d="M159.70,579.30 C178.03,579.21 196.36,579.12 214.69,579.08 C233.02,579.03 251.35,579.00 269.69,579.00 C288.02,579.00 306.35,579.00 324.68,579.00 C343.01,579.00 361.34,579.00 379.67,579.00 C398.00,579.00 416.33,579.00 434.66,579.00 C453.00,579.00 471.33,579.00 489.66,579.00 C507.99,579.00 526.32,579.00 544.65,579.00 C562.98,579.00 581.31,579.00 599.64,579.00 C617.97,579.00 636.30,579.00 654.64,579.00 C672.97,579.00 691.30,579.00 709.63,579.00 C727.96,579.00 746.29,579.00 764.62,579.00 C782.95,579.00 801.28,579.00 819.61,579.00 C837.95,579.00 856.28,579.00 874.61,579.00 C892.94,579.00 911.27,579.00 929.60,579.00" fill="none" stroke="#9800c6" stroke-width="1"/>
<path d="M159.70,568.20 C178.03,568.03 196.36,567.85 214.69,567.75 C233.02,567.65 251.35,567.60 269.69,567.60 C288.02,567.60 306.35,567.60 324.68,567.60 C343.01,567.60 361.34,567.60 379.67,567.60 C398.00,567.60 416.33,567.60 434.66,567.60 C453.00,567.60 471.33,567.60 489.66,567.60 C507.99,567.60 526.32,567.60 544.65,567.60 C562.98,567.60 581.31,567.60 599.64,567.60 C617.97,567.60 636.30,567.60 654.64,567.60 C672.97,567.60 691.30,567.60 709.63,567.60 C727.96,567.60 746.29,567.60 764.62,567.60 C782.95,567.60 801.28,567.60 819.61,567.60 C837.95,567.60 856.28,567.60 874.61,567.60 C892.94,567.60 911.27,567.60 929.60,567.60" fill="none" stroke="#a284f7" stroke-width="1"/>
<path d="M159.70,552.20 C178.03,552.11 196.36,552.02 214.69,551.97 C233.02,551.92 251.35,551.90 269.69,551.90 C288.02,551.90 306.35,551.90 324.68,551.90 C343.01,551.90 361.34,551.90 379.67,551.90 C398.00,551.90 416.33,551.90 434.66,551.90 C453.00,551.90 471.33,551.90 489.66,551.90 C507.99,551.90 526.32,551.90 544.65,551.90 C562.98,551.90 581.31,551.90 599.64,551.90 C617.97,551.90 636.30,551.90 654.64,551.90 C672.97,551.90 691.30,551.90 709.63,551.90 C727.96,551.90 746.29,551.90 764.62,551.90 C782.95,551.90 801.28,551.90 819.61,551.90 C837.95,551.90 856.28,551.90 874.61,551.90 C892.94,551.90 911.27,551.90 929.60,551.90" fill="none" stroke="#58abf0" stroke-width="1"/>
<path d="M159.70,533.00 C178.03,532.88 196.36,532.77 214.69,532.70 C233.02,532.63 251.35,532.60 269.69,532.60 C288.02,532.60 306.35,532.60 324.68,532.60 C343.01,532.60 361.34,532.60 379.67,532.60 C398.00,532.60 416.33,532.60 434.66,532.60 C453.00,532.60 471.33,532.60 489.66,532.60 C507.99,532.60 526.32,532.60 544.65,532.60 C562.98,532.60 581.31,532.60 599.64,532.60 C617.97,532.60 636.30,532.60 654.64,532.60 C672.97,532.60 691.30,532.60 709.63,532.60 C727.96,532.60 746.29,532.60 764.62,532.60 C782.95,532.60 801.28,532.60 819.61,532.60 C837.95,532.60 856.28,532.60 874.61,532.60 C892.94,532.60 911.27,532.60 929.60,532.60" fill="none" stroke="#3fc38a" stroke-width="1"/>
<path d="M159.70,500.30 C178.03,499.54 196.36,498.78 214.69,498.35 C233.02,497.92 251.35,497.70 269.69,497.70 C288.02,497.70 306.35,497.70 324.68,497.70 C343.01,497.70 361.34,497.70 379.67,497.70 C398.00,497.70 416.33,497.70 434.66,497.70 C453.00,497.70 471.33,497.70 489.66,497.70 C507.99,497.70 526.32,497.70 544.65,497.70 C562.98,497.70 581.31,497.70 599.64,497.70 C617.97,497.70 636.30,497.70 654.64,497.70 C672.97,497.70 691.30,497.70 709.63,497.70 C727.96,497.70 746.29,497.70 764.62,497.70 C782.95,497.70 801.28,497.70 819.61,497.70 C837.95,497.70 856.28,497.70 874.61,497.70 C892.94,497.70 911.27,497.70 929.60,497.70" fill="none" stroke="#a9b8c6" stroke-width="1"/>
<line x1="155.2" y1="497.80" x2="158.4" y2="497.80" stroke="#e3e6ea" stroke-width="1"/>
<text x="153.00" y="499.40" font-size="9.9" fill="#2f353b" font-weight="400" text-anchor="end" >$21M</text>
<line x1="155.2" y1="533.00" x2="158.4" y2="533.00" stroke="#e3e6ea" stroke-width="1"/>
<text x="153.00" y="535.80" font-size="9.9" fill="#2f353b" font-weight="400" text-anchor="end" >$14M</text>
<line x1="155.2" y1="552.80" x2="158.4" y2="552.80" stroke="#e3e6ea" stroke-width="1"/>
<text x="153.00" y="555.60" font-size="9.9" fill="#2f353b" font-weight="400" text-anchor="end" >$9.0M</text>
<line x1="155.2" y1="572.70" x2="158.4" y2="572.70" stroke="#e3e6ea" stroke-width="1"/>
<text x="153.00" y="575.50" font-size="9.9" fill="#2f353b" font-weight="400" text-anchor="end" >$4.5M</text>
<line x1="155.2" y1="592.50" x2="158.4" y2="592.50" stroke="#e3e6ea" stroke-width="1"/>
<text x="153.00" y="595.30" font-size="9.9" fill="#2f353b" font-weight="400" text-anchor="end" >$0</text>
<line x1="159.70" y1="593" x2="159.70" y2="597" stroke="#e3e6ea" stroke-width="1"/>
<line x1="159.70" y1="593.5" x2="159.70" y2="597.5" stroke="#e3e6ea" stroke-width="1"/>
<text x="159.70" y="610.60" font-size="9.25" fill="#2f353b" font-weight="400" text-anchor="middle" >Feb 22</text>
<line x1="269.69" y1="593.5" x2="269.69" y2="597.5" stroke="#e3e6ea" stroke-width="1"/>
<text x="269.69" y="610.60" font-size="9.25" fill="#2f353b" font-weight="400" text-anchor="middle" >Apr 22</text>
<line x1="379.67" y1="593.5" x2="379.67" y2="597.5" stroke="#e3e6ea" stroke-width="1"/>
<text x="379.67" y="610.60" font-size="9.25" fill="#2f353b" font-weight="400" text-anchor="middle" >Jun 22</text>
<line x1="489.66" y1="593.5" x2="489.66" y2="597.5" stroke="#e3e6ea" stroke-width="1"/>
<text x="489.66" y="610.60" font-size="9.25" fill="#2f353b" font-weight="400" text-anchor="middle" >Aug 22</text>
<line x1="599.64" y1="593.5" x2="599.64" y2="597.5" stroke="#e3e6ea" stroke-width="1"/>
<text x="599.64" y="610.60" font-size="9.25" fill="#2f353b" font-weight="400" text-anchor="middle" >Oct 22</text>
<line x1="709.63" y1="593.5" x2="709.63" y2="597.5" stroke="#e3e6ea" stroke-width="1"/>
<text x="709.63" y="610.60" font-size="9.25" fill="#2f353b" font-weight="400" text-anchor="middle" >Dec 22</text>
<line x1="819.61" y1="593.5" x2="819.61" y2="597.5" stroke="#e3e6ea" stroke-width="1"/>
<text x="819.61" y="610.60" font-size="9.25" fill="#2f353b" font-weight="400" text-anchor="middle" >Feb 23</text>
<line x1="929.60" y1="593.5" x2="929.60" y2="597.5" stroke="#e3e6ea" stroke-width="1"/>
<text x="937.80" y="610.60" font-size="9.25" fill="#2f353b" font-weight="400" text-anchor="end" >Apr 23</text>
<rect x="94.5" y="675.5" width="881" height="224" rx="7" fill="#fff" stroke="#e1e2e4" stroke-width="1"/>
<text x="114.70" y="708.00" font-size="11.6" fill="#30363c" font-weight="400" text-anchor="start" stroke="#30363c" stroke-width="0.25" textLength="100.4" lengthAdjust="spacingAndGlyphs">Headcount by Dept</text>
<circle cx="947.3" cy="699.30" r="1.75" fill="#1c1f23"/>
<circle cx="947.3" cy="705.00" r="1.75" fill="#1c1f23"/>
<circle cx="947.3" cy="710.70" r="1.75" fill="#1c1f23"/>
<path d="M140.60,836.20 C159.39,836.20 178.18,836.20 196.96,836.20 C215.75,836.20 234.54,835.73 253.33,835.71 C272.12,835.69 290.90,835.69 309.69,835.68 C328.48,835.67 347.27,835.66 366.06,835.65 C384.85,835.65 403.63,835.64 422.42,835.64 C441.21,835.64 460.00,835.63 478.79,835.63 C497.57,835.63 516.36,835.63 535.15,835.62 C553.94,835.62 572.73,835.62 591.51,835.62 C610.30,835.62 629.09,835.62 647.88,835.62 C666.67,835.62 685.45,835.62 704.24,835.62 C723.03,835.62 741.82,835.62 760.61,835.61 C779.40,835.61 798.18,835.61 816.97,835.61 C835.76,835.61 854.55,835.61 873.34,835.61 C892.12,835.61 910.91,835.61 929.70,835.61 L929.70,836.20 C910.91,836.20 892.12,836.20 873.34,836.20 C854.55,836.20 835.76,836.20 816.97,836.20 C798.18,836.20 779.40,836.20 760.61,836.20 C741.82,836.20 723.03,836.20 704.24,836.20 C685.45,836.20 666.67,836.20 647.88,836.20 C629.09,836.20 610.30,836.20 591.51,836.20 C572.73,836.20 553.94,836.20 535.15,836.20 C516.36,836.20 497.57,836.20 478.79,836.20 C460.00,836.20 441.21,836.20 422.42,836.20 C403.63,836.20 384.85,836.20 366.06,836.20 C347.27,836.20 328.48,836.20 309.69,836.20 C290.90,836.20 272.12,836.20 253.33,836.20 C234.54,836.20 215.75,836.20 196.96,836.20 C178.18,836.20 159.39,836.20 140.60,836.20 Z" fill="#8f73f5"/>
<path d="M140.60,836.20 C159.39,836.20 178.18,836.20 196.96,836.20 C215.75,836.20 234.54,834.94 253.33,834.88 C272.12,834.82 290.90,834.82 309.69,834.79 C328.48,834.77 347.27,834.75 366.06,834.74 C384.85,834.72 403.63,834.71 422.42,834.70 C441.21,834.69 460.00,834.68 478.79,834.68 C497.57,834.67 516.36,834.67 535.15,834.66 C553.94,834.66 572.73,834.66 591.51,834.65 C610.30,834.65 629.09,834.65 647.88,834.65 C666.67,834.64 685.45,834.64 704.24,834.64 C723.03,834.64 741.82,834.64 760.61,834.64 C779.40,834.64 798.18,834.64 816.97,834.64 C835.76,834.64 854.55,834.64 873.34,834.64 C892.12,834.64 910.91,834.64 929.70,834.64 L929.70,835.61 C910.91,835.61 892.12,835.61 873.34,835.61 C854.55,835.61 835.76,835.61 816.97,835.61 C798.18,835.61 779.40,835.61 760.61,835.61 C741.82,835.62 723.03,835.62 704.24,835.62 C685.45,835.62 666.67,835.62 647.88,835.62 C629.09,835.62 610.30,835.62 591.51,835.62 C572.73,835.62 553.94,835.62 535.15,835.62 C516.36,835.63 497.57,835.63 478.79,835.63 C460.00,835.63 441.21,835.64 422.42,835.64 C403.63,835.64 384.85,835.65 366.06,835.65 C347.27,835.66 328.48,835.67 309.69,835.68 C290.90,835.69 272.12,835.69 253.33,835.71 C234.54,835.73 215.75,836.20 196.96,836.20 C178.18,836.20 159.39,836.20 140.60,836.20 Z" fill="#ff5f5f"/>
<path d="M140.60,834.15 C159.39,834.24 178.18,834.34 196.96,834.34 C215.75,834.34 234.54,831.79 253.33,831.70 C272.12,831.61 290.90,831.60 309.69,831.56 C328.48,831.52 347.27,831.50 366.06,831.47 C384.85,831.45 403.63,831.43 422.42,831.42 C441.21,831.40 460.00,831.39 478.79,831.38 C497.57,831.37 516.36,831.36 535.15,831.35 C553.94,831.35 572.73,831.34 591.51,831.34 C610.30,831.33 629.09,831.33 647.88,831.33 C666.67,831.32 685.45,831.32 704.24,831.32 C723.03,831.32 741.82,831.32 760.61,831.32 C779.40,831.31 798.18,831.31 816.97,831.31 C835.76,831.31 854.55,831.31 873.34,831.31 C892.12,831.31 910.91,831.31 929.70,831.31 L929.70,834.64 C910.91,834.64 892.12,834.64 873.34,834.64 C854.55,834.64 835.76,834.64 816.97,834.64 C798.18,834.64 779.40,834.64 760.61,834.64 C741.82,834.64 723.03,834.64 704.24,834.64 C685.45,834.64 666.67,834.64 647.88,834.65 C629.09,834.65 610.30,834.65 591.51,834.65 C572.73,834.66 553.94,834.66 535.15,834.66 C516.36,834.67 497.57,834.67 478.79,834.68 C460.00,834.68 441.21,834.69 422.42,834.70 C403.63,834.71 384.85,834.72 366.06,834.74 C347.27,834.75 328.48,834.77 309.69,834.79 C290.90,834.82 272.12,834.82 253.33,834.88 C234.54,834.94 215.75,836.20 196.96,836.20 C178.18,836.20 159.39,836.20 140.60,836.20 Z" fill="#ffc24f"/>
<path d="M140.60,833.80 C159.39,833.80 178.18,833.80 196.96,833.80 C215.75,833.80 234.54,829.71 253.33,829.40 C272.12,829.09 290.90,829.06 309.69,828.94 C328.48,828.81 347.27,828.72 366.06,828.64 C384.85,828.55 403.63,828.50 422.42,828.44 C441.21,828.39 460.00,828.35 478.79,828.32 C497.57,828.28 516.36,828.26 535.15,828.23 C553.94,828.21 572.73,828.19 591.51,828.18 C610.30,828.16 629.09,828.15 647.88,828.14 C666.67,828.13 685.45,828.13 704.24,828.12 C723.03,828.12 741.82,828.11 760.61,828.11 C779.40,828.10 798.18,828.10 816.97,828.10 C835.76,828.09 854.55,828.09 873.34,828.09 C892.12,828.09 910.91,828.09 929.70,828.09 L929.70,831.31 C910.91,831.31 892.12,831.31 873.34,831.31 C854.55,831.31 835.76,831.31 816.97,831.31 C798.18,831.31 779.40,831.31 760.61,831.32 C741.82,831.32 723.03,831.32 704.24,831.32 C685.45,831.32 666.67,831.32 647.88,831.33 C629.09,831.33 610.30,831.33 591.51,831.34 C572.73,831.34 553.94,831.35 535.15,831.35 C516.36,831.36 497.57,831.37 478.79,831.38 C460.00,831.39 441.21,831.40 422.42,831.42 C403.63,831.43 384.85,831.45 366.06,831.47 C347.27,831.50 328.48,831.52 309.69,831.56 C290.90,831.60 272.12,831.61 253.33,831.70 C234.54,831.79 215.75,834.34 196.96,834.34 C178.18,834.34 159.39,834.24 140.60,834.15 Z" fill="#ffd0a2"/>
<path d="M140.60,830.72 C159.39,830.92 178.18,831.11 196.96,831.11 C215.75,831.11 234.54,820.68 253.33,820.40 C272.12,820.11 290.90,820.09 309.69,819.97 C328.48,819.85 347.27,819.77 366.06,819.69 C384.85,819.62 403.63,819.56 422.42,819.51 C441.21,819.46 460.00,819.43 478.79,819.39 C497.57,819.36 516.36,819.34 535.15,819.32 C553.94,819.30 572.73,819.28 591.51,819.27 C610.30,819.25 629.09,819.24 647.88,819.24 C666.67,819.23 685.45,819.22 704.24,819.21 C723.03,819.21 741.82,819.20 760.61,819.20 C779.40,819.20 798.18,819.19 816.97,819.19 C835.76,819.19 854.55,819.19 873.34,819.19 C892.12,819.18 910.91,819.18 929.70,819.18 L929.70,828.09 C910.91,828.09 892.12,828.09 873.34,828.09 C854.55,828.09 835.76,828.09 816.97,828.10 C798.18,828.10 779.40,828.10 760.61,828.11 C741.82,828.11 723.03,828.12 704.24,828.12 C685.45,828.13 666.67,828.13 647.88,828.14 C629.09,828.15 610.30,828.16 591.51,828.18 C572.73,828.19 553.94,828.21 535.15,828.23 C516.36,828.26 497.57,828.28 478.79,828.32 C460.00,828.35 441.21,828.39 422.42,828.44 C403.63,828.50 384.85,828.55 366.06,828.64 C347.27,828.72 328.48,828.81 309.69,828.94 C290.90,829.06 272.12,829.09 253.33,829.40 C234.54,829.71 215.75,833.80 196.96,833.80 C178.18,833.80 159.39,833.80 140.60,833.80 Z" fill="#8de1bb"/>
<path d="M140.60,827.30 C159.39,827.64 178.18,827.98 196.96,827.98 C215.75,827.98 234.54,812.24 253.33,811.89 C272.12,811.54 290.90,811.51 309.69,811.36 C328.48,811.21 347.27,811.08 366.06,810.97 C384.85,810.85 403.63,810.76 422.42,810.67 C441.21,810.58 460.00,810.51 478.79,810.45 C497.57,810.38 516.36,810.33 535.15,810.28 C553.94,810.23 572.73,810.19 591.51,810.16 C610.30,810.12 629.09,810.09 647.88,810.06 C666.67,810.04 685.45,810.01 704.24,809.99 C723.03,809.97 741.82,809.96 760.61,809.94 C779.40,809.93 798.18,809.91 816.97,809.90 C835.76,809.89 854.55,809.88 873.34,809.87 C892.12,809.86 910.91,809.86 929.70,809.85 L929.70,819.18 C910.91,819.18 892.12,819.18 873.34,819.19 C854.55,819.19 835.76,819.19 816.97,819.19 C798.18,819.19 779.40,819.20 760.61,819.20 C741.82,819.20 723.03,819.21 704.24,819.21 C685.45,819.22 666.67,819.23 647.88,819.24 C629.09,819.24 610.30,819.25 591.51,819.27 C572.73,819.28 553.94,819.30 535.15,819.32 C516.36,819.34 497.57,819.36 478.79,819.39 C460.00,819.43 441.21,819.46 422.42,819.51 C403.63,819.56 384.85,819.62 366.06,819.69 C347.27,819.77 328.48,819.85 309.69,819.97 C290.90,820.09 272.12,820.11 253.33,820.40 C234.54,820.68 215.75,831.11 196.96,831.11 C178.18,831.11 159.39,830.92 140.60,830.72 Z" fill="#d3c2fb"/>
<path d="M140.60,825.93 C159.39,826.32 178.18,826.71 196.96,826.71 C215.75,826.71 234.54,801.58 253.33,801.17 C272.12,800.77 290.90,800.74 309.69,800.57 C328.48,800.40 347.27,800.26 366.06,800.14 C384.85,800.01 403.63,799.91 422.42,799.82 C441.21,799.73 460.00,799.66 478.79,799.60 C497.57,799.53 516.36,799.48 535.15,799.44 C553.94,799.39 572.73,799.35 591.51,799.32 C610.30,799.29 629.09,799.26 647.88,799.24 C666.67,799.21 685.45,799.19 704.24,799.18 C723.03,799.16 741.82,799.15 760.61,799.13 C779.40,799.12 798.18,799.11 816.97,799.10 C835.76,799.09 854.55,799.09 873.34,799.08 C892.12,799.07 910.91,799.07 929.70,799.06 L929.70,809.85 C910.91,809.86 892.12,809.86 873.34,809.87 C854.55,809.88 835.76,809.89 816.97,809.90 C798.18,809.91 779.40,809.93 760.61,809.94 C741.82,809.96 723.03,809.97 704.24,809.99 C685.45,810.01 666.67,810.04 647.88,810.06 C629.09,810.09 610.30,810.12 591.51,810.16 C572.73,810.19 553.94,810.23 535.15,810.28 C516.36,810.33 497.57,810.38 478.79,810.45 C460.00,810.51 441.21,810.58 422.42,810.67 C403.63,810.76 384.85,810.85 366.06,810.97 C347.27,811.08 328.48,811.21 309.69,811.36 C290.90,811.51 272.12,811.54 253.33,811.89 C234.54,812.24 215.75,827.98 196.96,827.98 C178.18,827.98 159.39,827.64 140.60,827.30 Z" fill="#93ccf3"/>
<path d="M140.60,820.79 C159.39,821.16 178.18,821.52 196.96,821.52 C215.75,821.52 234.54,777.04 253.33,776.18 C272.12,775.31 290.90,775.24 309.69,774.88 C328.48,774.51 347.27,774.24 366.06,773.99 C384.85,773.74 403.63,773.56 422.42,773.39 C441.21,773.22 460.00,773.10 478.79,772.98 C497.57,772.87 516.36,772.78 535.15,772.71 C553.94,772.63 572.73,772.57 591.51,772.52 C610.30,772.46 629.09,772.42 647.88,772.39 C666.67,772.35 685.45,772.32 704.24,772.30 C723.03,772.28 741.82,772.26 760.61,772.24 C779.40,772.22 798.18,772.21 816.97,772.20 C835.76,772.19 854.55,772.18 873.34,772.17 C892.12,772.17 910.91,772.16 929.70,772.15 L929.70,799.06 C910.91,799.07 892.12,799.07 873.34,799.08 C854.55,799.09 835.76,799.09 816.97,799.10 C798.18,799.11 779.40,799.12 760.61,799.13 C741.82,799.15 723.03,799.16 704.24,799.18 C685.45,799.19 666.67,799.21 647.88,799.24 C629.09,799.26 610.30,799.29 591.51,799.32 C572.73,799.35 553.94,799.39 535.15,799.44 C516.36,799.48 497.57,799.53 478.79,799.60 C460.00,799.66 441.21,799.73 422.42,799.82 C403.63,799.91 384.85,800.01 366.06,800.14 C347.27,800.26 328.48,800.40 309.69,800.57 C290.90,800.74 272.12,800.77 253.33,801.17 C234.54,801.58 215.75,826.71 196.96,826.71 C178.18,826.71 159.39,826.32 140.60,825.93 Z" fill="#d9dfe6"/>
<path d="M140.60,816.29 C159.39,816.85 178.18,817.41 196.96,817.41 C215.75,817.41 234.54,745.64 253.33,744.72 C272.12,743.80 290.90,743.73 309.69,743.34 C328.48,742.96 347.27,742.67 366.06,742.41 C384.85,742.14 403.63,741.95 422.42,741.77 C441.21,741.59 460.00,741.46 478.79,741.34 C497.57,741.21 516.36,741.12 535.15,741.04 C553.94,740.96 572.73,740.90 591.51,740.84 C610.30,740.78 629.09,740.74 647.88,740.70 C666.67,740.67 685.45,740.64 704.24,740.61 C723.03,740.59 741.82,740.57 760.61,740.55 C779.40,740.53 798.18,740.52 816.97,740.51 C835.76,740.49 854.55,740.48 873.34,740.48 C892.12,740.47 910.91,740.46 929.70,740.46 L929.70,772.15 C910.91,772.16 892.12,772.17 873.34,772.17 C854.55,772.18 835.76,772.19 816.97,772.20 C798.18,772.21 779.40,772.22 760.61,772.24 C741.82,772.26 723.03,772.28 704.24,772.30 C685.45,772.32 666.67,772.35 647.88,772.39 C629.09,772.42 610.30,772.46 591.51,772.52 C572.73,772.57 553.94,772.63 535.15,772.71 C516.36,772.78 497.57,772.87 478.79,772.98 C460.00,773.10 441.21,773.22 422.42,773.39 C403.63,773.56 384.85,773.74 366.06,773.99 C347.27,774.24 328.48,774.51 309.69,774.88 C290.90,775.24 272.12,775.31 253.33,776.18 C234.54,777.04 215.75,821.52 196.96,821.52 C178.18,821.52 159.39,821.16 140.60,820.79 Z" fill="#8de1bb"/>
<line x1="141" y1="740.60" x2="930" y2="740.60" stroke="#c5ccd4" stroke-opacity="0.42" stroke-width="1" stroke-dasharray="2.2,2.6"/>
<line x1="141" y1="777.30" x2="930" y2="777.30" stroke="#c5ccd4" stroke-opacity="0.42" stroke-width="1" stroke-dasharray="2.2,2.6"/>
<line x1="141" y1="797.00" x2="930" y2="797.00" stroke="#c5ccd4" stroke-opacity="0.42" stroke-width="1" stroke-dasharray="2.2,2.6"/>
<line x1="141" y1="816.30" x2="930" y2="816.30" stroke="#c5ccd4" stroke-opacity="0.42" stroke-width="1" stroke-dasharray="2.2,2.6"/>
<line x1="141" y1="836.10" x2="930" y2="836.10" stroke="#c5ccd4" stroke-opacity="0.42" stroke-width="1" stroke-dasharray="2.2,2.6"/>
<path d="M140.60,836.20 C159.39,836.20 178.18,836.20 196.96,836.20 C215.75,836.20 234.54,835.73 253.33,835.71 C272.12,835.69 290.90,835.69 309.69,835.68 C328.48,835.67 347.27,835.66 366.06,835.65 C384.85,835.65 403.63,835.64 422.42,835.64 C441.21,835.64 460.00,835.63 478.79,835.63 C497.57,835.63 516.36,835.63 535.15,835.62 C553.94,835.62 572.73,835.62 591.51,835.62 C610.30,835.62 629.09,835.62 647.88,835.62 C666.67,835.62 685.45,835.62 704.24,835.62 C723.03,835.62 741.82,835.62 760.61,835.61 C779.40,835.61 798.18,835.61 816.97,835.61 C835.76,835.61 854.55,835.61 873.34,835.61 C892.12,835.61 910.91,835.61 929.70,835.61" fill="none" stroke="none" stroke-width="1"/>
<path d="M140.60,836.20 C159.39,836.20 178.18,836.20 196.96,836.20 C215.75,836.20 234.54,834.94 253.33,834.88 C272.12,834.82 290.90,834.82 309.69,834.79 C328.48,834.77 347.27,834.75 366.06,834.74 C384.85,834.72 403.63,834.71 422.42,834.70 C441.21,834.69 460.00,834.68 478.79,834.68 C497.57,834.67 516.36,834.67 535.15,834.66 C553.94,834.66 572.73,834.66 591.51,834.65 C610.30,834.65 629.09,834.65 647.88,834.65 C666.67,834.64 685.45,834.64 704.24,834.64 C723.03,834.64 741.82,834.64 760.61,834.64 C779.40,834.64 798.18,834.64 816.97,834.64 C835.76,834.64 854.55,834.64 873.34,834.64 C892.12,834.64 910.91,834.64 929.70,834.64" fill="none" stroke="none" stroke-width="1"/>
<path d="M140.60,834.15 C159.39,834.24 178.18,834.34 196.96,834.34 C215.75,834.34 234.54,831.79 253.33,831.70 C272.12,831.61 290.90,831.60 309.69,831.56 C328.48,831.52 347.27,831.50 366.06,831.47 C384.85,831.45 403.63,831.43 422.42,831.42 C441.21,831.40 460.00,831.39 478.79,831.38 C497.57,831.37 516.36,831.36 535.15,831.35 C553.94,831.35 572.73,831.34 591.51,831.34 C610.30,831.33 629.09,831.33 647.88,831.33 C666.67,831.32 685.45,831.32 704.24,831.32 C723.03,831.32 741.82,831.32 760.61,831.32 C779.40,831.31 798.18,831.31 816.97,831.31 C835.76,831.31 854.55,831.31 873.34,831.31 C892.12,831.31 910.91,831.31 929.70,831.31" fill="none" stroke="#ffb02e" stroke-width="1"/>
<path d="M140.60,833.80 C159.39,833.80 178.18,833.80 196.96,833.80 C215.75,833.80 234.54,829.71 253.33,829.40 C272.12,829.09 290.90,829.06 309.69,828.94 C328.48,828.81 347.27,828.72 366.06,828.64 C384.85,828.55 403.63,828.50 422.42,828.44 C441.21,828.39 460.00,828.35 478.79,828.32 C497.57,828.28 516.36,828.26 535.15,828.23 C553.94,828.21 572.73,828.19 591.51,828.18 C610.30,828.16 629.09,828.15 647.88,828.14 C666.67,828.13 685.45,828.13 704.24,828.12 C723.03,828.12 741.82,828.11 760.61,828.11 C779.40,828.10 798.18,828.10 816.97,828.10 C835.76,828.09 854.55,828.09 873.34,828.09 C892.12,828.09 910.91,828.09 929.70,828.09" fill="none" stroke="#ffb877" stroke-width="1"/>
<path d="M140.60,830.72 C159.39,830.92 178.18,831.11 196.96,831.11 C215.75,831.11 234.54,820.68 253.33,820.40 C272.12,820.11 290.90,820.09 309.69,819.97 C328.48,819.85 347.27,819.77 366.06,819.69 C384.85,819.62 403.63,819.56 422.42,819.51 C441.21,819.46 460.00,819.43 478.79,819.39 C497.57,819.36 516.36,819.34 535.15,819.32 C553.94,819.30 572.73,819.28 591.51,819.27 C610.30,819.25 629.09,819.24 647.88,819.24 C666.67,819.23 685.45,819.22 704.24,819.21 C723.03,819.21 741.82,819.20 760.61,819.20 C779.40,819.20 798.18,819.19 816.97,819.19 C835.76,819.19 854.55,819.19 873.34,819.19 C892.12,819.18 910.91,819.18 929.70,819.18" fill="none" stroke="#3ec48a" stroke-width="1"/>
<path d="M140.60,827.30 C159.39,827.64 178.18,827.98 196.96,827.98 C215.75,827.98 234.54,812.24 253.33,811.89 C272.12,811.54 290.90,811.51 309.69,811.36 C328.48,811.21 347.27,811.08 366.06,810.97 C384.85,810.85 403.63,810.76 422.42,810.67 C441.21,810.58 460.00,810.51 478.79,810.45 C497.57,810.38 516.36,810.33 535.15,810.28 C553.94,810.23 572.73,810.19 591.51,810.16 C610.30,810.12 629.09,810.09 647.88,810.06 C666.67,810.04 685.45,810.01 704.24,809.99 C723.03,809.97 741.82,809.96 760.61,809.94 C779.40,809.93 798.18,809.91 816.97,809.90 C835.76,809.89 854.55,809.88 873.34,809.87 C892.12,809.86 910.91,809.86 929.70,809.85" fill="none" stroke="#a383f7" stroke-width="1"/>
<path d="M140.60,825.93 C159.39,826.32 178.18,826.71 196.96,826.71 C215.75,826.71 234.54,801.58 253.33,801.17 C272.12,800.77 290.90,800.74 309.69,800.57 C328.48,800.40 347.27,800.26 366.06,800.14 C384.85,800.01 403.63,799.91 422.42,799.82 C441.21,799.73 460.00,799.66 478.79,799.60 C497.57,799.53 516.36,799.48 535.15,799.44 C553.94,799.39 572.73,799.35 591.51,799.32 C610.30,799.29 629.09,799.26 647.88,799.24 C666.67,799.21 685.45,799.19 704.24,799.18 C723.03,799.16 741.82,799.15 760.61,799.13 C779.40,799.12 798.18,799.11 816.97,799.10 C835.76,799.09 854.55,799.09 873.34,799.08 C892.12,799.07 910.91,799.07 929.70,799.06" fill="none" stroke="#55a9ef" stroke-width="1"/>
<path d="M140.60,820.79 C159.39,821.16 178.18,821.52 196.96,821.52 C215.75,821.52 234.54,777.04 253.33,776.18 C272.12,775.31 290.90,775.24 309.69,774.88 C328.48,774.51 347.27,774.24 366.06,773.99 C384.85,773.74 403.63,773.56 422.42,773.39 C441.21,773.22 460.00,773.10 478.79,772.98 C497.57,772.87 516.36,772.78 535.15,772.71 C553.94,772.63 572.73,772.57 591.51,772.52 C610.30,772.46 629.09,772.42 647.88,772.39 C666.67,772.35 685.45,772.32 704.24,772.30 C723.03,772.28 741.82,772.26 760.61,772.24 C779.40,772.22 798.18,772.21 816.97,772.20 C835.76,772.19 854.55,772.18 873.34,772.17 C892.12,772.17 910.91,772.16 929.70,772.15" fill="none" stroke="#c6d0da" stroke-width="1"/>
<path d="M140.60,816.29 C159.39,816.85 178.18,817.41 196.96,817.41 C215.75,817.41 234.54,745.64 253.33,744.72 C272.12,743.80 290.90,743.73 309.69,743.34 C328.48,742.96 347.27,742.67 366.06,742.41 C384.85,742.14 403.63,741.95 422.42,741.77 C441.21,741.59 460.00,741.46 478.79,741.34 C497.57,741.21 516.36,741.12 535.15,741.04 C553.94,740.96 572.73,740.90 591.51,740.84 C610.30,740.78 629.09,740.74 647.88,740.70 C666.67,740.67 685.45,740.64 704.24,740.61 C723.03,740.59 741.82,740.57 760.61,740.55 C779.40,740.53 798.18,740.52 816.97,740.51 C835.76,740.49 854.55,740.48 873.34,740.48 C892.12,740.47 910.91,740.46 929.70,740.46" fill="none" stroke="#33c47f" stroke-width="1.5"/>
<line x1="140.60" y1="740.6" x2="140.60" y2="836.2" stroke="#e3e6ea" stroke-width="1"/>
<line x1="135.6" y1="740.60" x2="139.0" y2="740.60" stroke="#e3e6ea" stroke-width="1"/>
<text x="133.70" y="742.90" font-size="9.9" fill="#2f353b" font-weight="400" text-anchor="end" >195</text>
<line x1="135.6" y1="777.30" x2="139.0" y2="777.30" stroke="#e3e6ea" stroke-width="1"/>
<text x="133.70" y="779.60" font-size="9.9" fill="#2f353b" font-weight="400" text-anchor="end" >120</text>
<line x1="135.6" y1="797.00" x2="139.0" y2="797.00" stroke="#e3e6ea" stroke-width="1"/>
<text x="133.70" y="799.30" font-size="9.9" fill="#2f353b" font-weight="400" text-anchor="end" >80</text>
<line x1="135.6" y1="816.30" x2="139.0" y2="816.30" stroke="#e3e6ea" stroke-width="1"/>
<text x="133.70" y="818.60" font-size="9.9" fill="#2f353b" font-weight="400" text-anchor="end" >40</text>
<line x1="135.6" y1="836.10" x2="139.0" y2="836.10" stroke="#e3e6ea" stroke-width="1"/>
<text x="133.70" y="838.40" font-size="9.9" fill="#2f353b" font-weight="400" text-anchor="end" >0</text>
<line x1="140.60" y1="836.6" x2="140.60" y2="840.6" stroke="#e3e6ea" stroke-width="1"/>
<text x="131.90" y="853.80" font-size="9.25" fill="#2f353b" font-weight="400" text-anchor="start" >Feb 22</text>
<line x1="253.33" y1="836.6" x2="253.33" y2="840.6" stroke="#e3e6ea" stroke-width="1"/>
<text x="253.33" y="853.80" font-size="9.25" fill="#2f353b" font-weight="400" text-anchor="middle" >Apr 22</text>
<line x1="366.06" y1="836.6" x2="366.06" y2="840.6" stroke="#e3e6ea" stroke-width="1"/>
<text x="366.06" y="853.80" font-size="9.25" fill="#2f353b" font-weight="400" text-anchor="middle" >Jun 22</text>
<line x1="478.79" y1="836.6" x2="478.79" y2="840.6" stroke="#e3e6ea" stroke-width="1"/>
<text x="478.79" y="853.80" font-size="9.25" fill="#2f353b" font-weight="400" text-anchor="middle" >Aug 22</text>
<line x1="591.51" y1="836.6" x2="591.51" y2="840.6" stroke="#e3e6ea" stroke-width="1"/>
<text x="591.51" y="853.80" font-size="9.25" fill="#2f353b" font-weight="400" text-anchor="middle" >Oct 22</text>
<line x1="704.24" y1="836.6" x2="704.24" y2="840.6" stroke="#e3e6ea" stroke-width="1"/>
<text x="704.24" y="853.80" font-size="9.25" fill="#2f353b" font-weight="400" text-anchor="middle" >Dec 22</text>
<line x1="816.97" y1="836.6" x2="816.97" y2="840.6" stroke="#e3e6ea" stroke-width="1"/>
<text x="816.97" y="853.80" font-size="9.25" fill="#2f353b" font-weight="400" text-anchor="middle" >Feb 23</text>
<line x1="929.70" y1="836.6" x2="929.70" y2="840.6" stroke="#e3e6ea" stroke-width="1"/>
<text x="938.00" y="853.80" font-size="9.25" fill="#2f353b" font-weight="400" text-anchor="end" >Apr 23</text>
<rect x="1001.5" y="188.5" width="881" height="223" rx="7" fill="#fff" stroke="#e1e2e4" stroke-width="1"/>
<text x="1021.50" y="222.40" font-size="11.6" fill="#30363c" font-weight="400" text-anchor="start" stroke="#30363c" stroke-width="0.25" textLength="119" lengthAdjust="spacingAndGlyphs">Headcount by Location</text>
<circle cx="1854.3" cy="212.90" r="1.75" fill="#1c1f23"/>
<circle cx="1854.3" cy="218.60" r="1.75" fill="#1c1f23"/>
<circle cx="1854.3" cy="224.30" r="1.75" fill="#1c1f23"/>
<line x1="1048" y1="254.31" x2="1861" y2="254.31" stroke="#d9dee4" stroke-width="1" stroke-dasharray="1.8,3"/>
<line x1="1041.6" y1="254.31" x2="1046.4" y2="254.31" stroke="#e3e6ea" stroke-width="1"/>
<text x="1040.60" y="257.20" font-size="9.9" fill="#2f353b" font-weight="400" text-anchor="end" >150</text>
<line x1="1048" y1="273.36" x2="1861" y2="273.36" stroke="#d9dee4" stroke-width="1" stroke-dasharray="1.8,3"/>
<line x1="1041.6" y1="273.36" x2="1046.4" y2="273.36" stroke="#e3e6ea" stroke-width="1"/>
<text x="1040.60" y="276.26" font-size="9.9" fill="#2f353b" font-weight="400" text-anchor="end" >120</text>
<line x1="1048" y1="292.42" x2="1861" y2="292.42" stroke="#d9dee4" stroke-width="1" stroke-dasharray="1.8,3"/>
<line x1="1041.6" y1="292.42" x2="1046.4" y2="292.42" stroke="#e3e6ea" stroke-width="1"/>
<text x="1040.60" y="295.32" font-size="9.9" fill="#2f353b" font-weight="400" text-anchor="end" >90</text>
<line x1="1048" y1="311.48" x2="1861" y2="311.48" stroke="#d9dee4" stroke-width="1" stroke-dasharray="1.8,3"/>
<line x1="1041.6" y1="311.48" x2="1046.4" y2="311.48" stroke="#e3e6ea" stroke-width="1"/>
<text x="1040.60" y="314.38" font-size="9.9" fill="#2f353b" font-weight="400" text-anchor="end" >60</text>
<line x1="1048" y1="330.54" x2="1861" y2="330.54" stroke="#d9dee4" stroke-width="1" stroke-dasharray="1.8,3"/>
<line x1="1041.6" y1="330.54" x2="1046.4" y2="330.54" stroke="#e3e6ea" stroke-width="1"/>
<text x="1040.60" y="333.44" font-size="9.9" fill="#2f353b" font-weight="400" text-anchor="end" >30</text>
<line x1="1048" y1="349.60" x2="1861" y2="349.60" stroke="#d9dee4" stroke-width="1" stroke-dasharray="1.8,3"/>
<line x1="1041.6" y1="349.60" x2="1046.4" y2="349.60" stroke="#e3e6ea" stroke-width="1"/>
<text x="1040.60" y="352.50" font-size="9.9" fill="#2f353b" font-weight="400" text-anchor="end" >0</text>
<line x1="1047.8" y1="254.31" x2="1047.8" y2="350.00" stroke="#e3e6ea" stroke-width="1"/>
<line x1="1092.60" y1="350.10" x2="1092.60" y2="354.40" stroke="#e3e6ea" stroke-width="1"/>
<rect x="1054.00" y="346.68" width="77.2" height="3.42" fill="#ff6464"/>
<text x="1092.60" y="368.20" font-size="9.4" fill="#2f353b" font-weight="400" text-anchor="middle" >Boston</text>
<line x1="1182.95" y1="350.10" x2="1182.95" y2="354.40" stroke="#e3e6ea" stroke-width="1"/>
<rect x="1144.35" y="347.69" width="77.2" height="2.41" fill="#b9c6d1"/>
<text x="1182.95" y="368.20" font-size="9.4" fill="#2f353b" font-weight="400" text-anchor="middle" >Chicago</text>
<line x1="1273.30" y1="350.10" x2="1273.30" y2="354.40" stroke="#e3e6ea" stroke-width="1"/>
<rect x="1234.70" y="341.09" width="77.2" height="9.01" fill="#40e6d5"/>
<text x="1273.30" y="368.20" font-size="9.4" fill="#2f353b" font-weight="400" text-anchor="middle" >Dallas</text>
<line x1="1363.65" y1="350.10" x2="1363.65" y2="354.40" stroke="#e3e6ea" stroke-width="1"/>
<rect x="1325.05" y="344.07" width="77.2" height="6.03" fill="#45cc8c"/>
<text x="1363.65" y="368.20" font-size="9.4" fill="#2f353b" font-weight="400" text-anchor="middle" >London</text>
<line x1="1454.00" y1="350.10" x2="1454.00" y2="354.40" stroke="#e3e6ea" stroke-width="1"/>
<rect x="1415.40" y="346.68" width="77.2" height="3.42" fill="#ff6464"/>
<text x="1454.00" y="368.20" font-size="9.4" fill="#2f353b" font-weight="400" text-anchor="middle" >Miami</text>
<line x1="1544.35" y1="350.10" x2="1544.35" y2="354.40" stroke="#e3e6ea" stroke-width="1"/>
<rect x="1505.75" y="259.13" width="77.2" height="90.97" fill="#ff5c9e"/>
<text x="1544.35" y="368.20" font-size="9.4" fill="#2f353b" font-weight="400" text-anchor="middle" >New York</text>
<line x1="1634.70" y1="350.10" x2="1634.70" y2="354.40" stroke="#e3e6ea" stroke-width="1"/>
<text x="1634.70" y="368.20" font-size="9.4" fill="#2f353b" font-weight="400" text-anchor="middle" >Remote</text>
<line x1="1725.05" y1="350.10" x2="1725.05" y2="354.40" stroke="#e3e6ea" stroke-width="1"/>
<text x="1725.05" y="368.20" font-size="9.4" fill="#2f353b" font-weight="400" text-anchor="middle" >Salt Lake City</text>
<line x1="1815.40" y1="350.10" x2="1815.40" y2="354.40" stroke="#e3e6ea" stroke-width="1"/>
<rect x="1776.80" y="332.13" width="77.2" height="17.97" fill="#1f79bf"/>
<text x="1815.40" y="368.20" font-size="9.4" fill="#2f353b" font-weight="400" text-anchor="middle" >San Francisco</text>
<rect x="1001.5" y="432.5" width="881" height="223" rx="7" fill="#fff" stroke="#e1e2e4" stroke-width="1"/>
<text x="1021.50" y="465.40" font-size="11.6" fill="#30363c" font-weight="400" text-anchor="start" stroke="#30363c" stroke-width="0.25" textLength="94.8" lengthAdjust="spacingAndGlyphs">Total Cost by Dept</text>
<circle cx="1854.3" cy="456.20" r="1.75" fill="#1c1f23"/>
<circle cx="1854.3" cy="461.90" r="1.75" fill="#1c1f23"/>
<circle cx="1854.3" cy="467.60" r="1.75" fill="#1c1f23"/>
<path d="M1065.70,587.80 C1084.03,587.77 1102.36,587.74 1120.69,587.73 C1139.02,587.71 1157.35,587.70 1175.69,587.70 C1194.02,587.70 1212.35,587.70 1230.68,587.70 C1249.01,587.70 1267.34,587.70 1285.67,587.70 C1304.00,587.70 1322.33,587.70 1340.66,587.70 C1359.00,587.70 1377.33,587.70 1395.66,587.70 C1413.99,587.70 1432.32,587.70 1450.65,587.70 C1468.98,587.70 1487.31,587.70 1505.64,587.70 C1523.97,587.70 1542.30,587.70 1560.64,587.70 C1578.97,587.70 1597.30,587.70 1615.63,587.70 C1633.96,587.70 1652.29,587.70 1670.62,587.70 C1688.95,587.70 1707.28,587.70 1725.61,587.70 C1743.95,587.70 1762.28,587.70 1780.61,587.70 C1798.94,587.70 1817.27,587.70 1835.60,587.70 L1835.60,593.00 C1817.27,593.00 1798.94,593.00 1780.61,593.00 C1762.28,593.00 1743.95,593.00 1725.61,593.00 C1707.28,593.00 1688.95,593.00 1670.62,593.00 C1652.29,593.00 1633.96,593.00 1615.63,593.00 C1597.30,593.00 1578.97,593.00 1560.64,593.00 C1542.30,593.00 1523.97,593.00 1505.64,593.00 C1487.31,593.00 1468.98,593.00 1450.65,593.00 C1432.32,593.00 1413.99,593.00 1395.66,593.00 C1377.33,593.00 1359.00,593.00 1340.66,593.00 C1322.33,593.00 1304.00,593.00 1285.67,593.00 C1267.34,593.00 1249.01,593.00 1230.68,593.00 C1212.35,593.00 1194.02,593.00 1175.69,593.00 C1157.35,593.00 1139.02,593.00 1120.69,593.00 C1102.36,593.00 1084.03,593.00 1065.70,593.00 Z" fill="#ffcf9f"/>
<path d="M1065.70,579.30 C1084.03,579.21 1102.36,579.12 1120.69,579.08 C1139.02,579.03 1157.35,579.00 1175.69,579.00 C1194.02,579.00 1212.35,579.00 1230.68,579.00 C1249.01,579.00 1267.34,579.00 1285.67,579.00 C1304.00,579.00 1322.33,579.00 1340.66,579.00 C1359.00,579.00 1377.33,579.00 1395.66,579.00 C1413.99,579.00 1432.32,579.00 1450.65,579.00 C1468.98,579.00 1487.31,579.00 1505.64,579.00 C1523.97,579.00 1542.30,579.00 1560.64,579.00 C1578.97,579.00 1597.30,579.00 1615.63,579.00 C1633.96,579.00 1652.29,579.00 1670.62,579.00 C1688.95,579.00 1707.28,579.00 1725.61,579.00 C1743.95,579.00 1762.28,579.00 1780.61,579.00 C1798.94,579.00 1817.27,579.00 1835.60,579.00 L1835.60,587.70 C1817.27,587.70 1798.94,587.70 1780.61,587.70 C1762.28,587.70 1743.95,587.70 1725.61,587.70 C1707.28,587.70 1688.95,587.70 1670.62,587.70 C1652.29,587.70 1633.96,587.70 1615.63,587.70 C1597.30,587.70 1578.97,587.70 1560.64,587.70 C1542.30,587.70 1523.97,587.70 1505.64,587.70 C1487.31,587.70 1468.98,587.70 1450.65,587.70 C1432.32,587.70 1413.99,587.70 1395.66,587.70 C1377.33,587.70 1359.00,587.70 1340.66,587.70 C1322.33,587.70 1304.00,587.70 1285.67,587.70 C1267.34,587.70 1249.01,587.70 1230.68,587.70 C1212.35,587.70 1194.02,587.70 1175.69,587.70 C1157.35,587.70 1139.02,587.71 1120.69,587.73 C1102.36,587.74 1084.03,587.77 1065.70,587.80 Z" fill="#c96bd2"/>
<path d="M1065.70,568.20 C1084.03,568.03 1102.36,567.85 1120.69,567.75 C1139.02,567.65 1157.35,567.60 1175.69,567.60 C1194.02,567.60 1212.35,567.60 1230.68,567.60 C1249.01,567.60 1267.34,567.60 1285.67,567.60 C1304.00,567.60 1322.33,567.60 1340.66,567.60 C1359.00,567.60 1377.33,567.60 1395.66,567.60 C1413.99,567.60 1432.32,567.60 1450.65,567.60 C1468.98,567.60 1487.31,567.60 1505.64,567.60 C1523.97,567.60 1542.30,567.60 1560.64,567.60 C1578.97,567.60 1597.30,567.60 1615.63,567.60 C1633.96,567.60 1652.29,567.60 1670.62,567.60 C1688.95,567.60 1707.28,567.60 1725.61,567.60 C1743.95,567.60 1762.28,567.60 1780.61,567.60 C1798.94,567.60 1817.27,567.60 1835.60,567.60 L1835.60,579.00 C1817.27,579.00 1798.94,579.00 1780.61,579.00 C1762.28,579.00 1743.95,579.00 1725.61,579.00 C1707.28,579.00 1688.95,579.00 1670.62,579.00 C1652.29,579.00 1633.96,579.00 1615.63,579.00 C1597.30,579.00 1578.97,579.00 1560.64,579.00 C1542.30,579.00 1523.97,579.00 1505.64,579.00 C1487.31,579.00 1468.98,579.00 1450.65,579.00 C1432.32,579.00 1413.99,579.00 1395.66,579.00 C1377.33,579.00 1359.00,579.00 1340.66,579.00 C1322.33,579.00 1304.00,579.00 1285.67,579.00 C1267.34,579.00 1249.01,579.00 1230.68,579.00 C1212.35,579.00 1194.02,579.00 1175.69,579.00 C1157.35,579.00 1139.02,579.03 1120.69,579.08 C1102.36,579.12 1084.03,579.21 1065.70,579.30 Z" fill="#d4c2fc"/>
<path d="M1065.70,552.20 C1084.03,552.11 1102.36,552.02 1120.69,551.97 C1139.02,551.92 1157.35,551.90 1175.69,551.90 C1194.02,551.90 1212.35,551.90 1230.68,551.90 C1249.01,551.90 1267.34,551.90 1285.67,551.90 C1304.00,551.90 1322.33,551.90 1340.66,551.90 C1359.00,551.90 1377.33,551.90 1395.66,551.90 C1413.99,551.90 1432.32,551.90 1450.65,551.90 C1468.98,551.90 1487.31,551.90 1505.64,551.90 C1523.97,551.90 1542.30,551.90 1560.64,551.90 C1578.97,551.90 1597.30,551.90 1615.63,551.90 C1633.96,551.90 1652.29,551.90 1670.62,551.90 C1688.95,551.90 1707.28,551.90 1725.61,551.90 C1743.95,551.90 1762.28,551.90 1780.61,551.90 C1798.94,551.90 1817.27,551.90 1835.60,551.90 L1835.60,567.60 C1817.27,567.60 1798.94,567.60 1780.61,567.60 C1762.28,567.60 1743.95,567.60 1725.61,567.60 C1707.28,567.60 1688.95,567.60 1670.62,567.60 C1652.29,567.60 1633.96,567.60 1615.63,567.60 C1597.30,567.60 1578.97,567.60 1560.64,567.60 C1542.30,567.60 1523.97,567.60 1505.64,567.60 C1487.31,567.60 1468.98,567.60 1450.65,567.60 C1432.32,567.60 1413.99,567.60 1395.66,567.60 C1377.33,567.60 1359.00,567.60 1340.66,567.60 C1322.33,567.60 1304.00,567.60 1285.67,567.60 C1267.34,567.60 1249.01,567.60 1230.68,567.60 C1212.35,567.60 1194.02,567.60 1175.69,567.60 C1157.35,567.60 1139.02,567.65 1120.69,567.75 C1102.36,567.85 1084.03,568.03 1065.70,568.20 Z" fill="#93ccf4"/>
<path d="M1065.70,533.00 C1084.03,532.88 1102.36,532.77 1120.69,532.70 C1139.02,532.63 1157.35,532.60 1175.69,532.60 C1194.02,532.60 1212.35,532.60 1230.68,532.60 C1249.01,532.60 1267.34,532.60 1285.67,532.60 C1304.00,532.60 1322.33,532.60 1340.66,532.60 C1359.00,532.60 1377.33,532.60 1395.66,532.60 C1413.99,532.60 1432.32,532.60 1450.65,532.60 C1468.98,532.60 1487.31,532.60 1505.64,532.60 C1523.97,532.60 1542.30,532.60 1560.64,532.60 C1578.97,532.60 1597.30,532.60 1615.63,532.60 C1633.96,532.60 1652.29,532.60 1670.62,532.60 C1688.95,532.60 1707.28,532.60 1725.61,532.60 C1743.95,532.60 1762.28,532.60 1780.61,532.60 C1798.94,532.60 1817.27,532.60 1835.60,532.60 L1835.60,551.90 C1817.27,551.90 1798.94,551.90 1780.61,551.90 C1762.28,551.90 1743.95,551.90 1725.61,551.90 C1707.28,551.90 1688.95,551.90 1670.62,551.90 C1652.29,551.90 1633.96,551.90 1615.63,551.90 C1597.30,551.90 1578.97,551.90 1560.64,551.90 C1542.30,551.90 1523.97,551.90 1505.64,551.90 C1487.31,551.90 1468.98,551.90 1450.65,551.90 C1432.32,551.90 1413.99,551.90 1395.66,551.90 C1377.33,551.90 1359.00,551.90 1340.66,551.90 C1322.33,551.90 1304.00,551.90 1285.67,551.90 C1267.34,551.90 1249.01,551.90 1230.68,551.90 C1212.35,551.90 1194.02,551.90 1175.69,551.90 C1157.35,551.90 1139.02,551.92 1120.69,551.97 C1102.36,552.02 1084.03,552.11 1065.70,552.20 Z" fill="#8de1bb"/>
<path d="M1065.70,501.20 C1084.03,500.18 1102.36,499.16 1120.69,498.57 C1139.02,497.99 1157.35,497.70 1175.69,497.70 C1194.02,497.70 1212.35,497.70 1230.68,497.70 C1249.01,497.70 1267.34,497.70 1285.67,497.70 C1304.00,497.70 1322.33,497.70 1340.66,497.70 C1359.00,497.70 1377.33,497.70 1395.66,497.70 C1413.99,497.70 1432.32,497.70 1450.65,497.70 C1468.98,497.70 1487.31,497.70 1505.64,497.70 C1523.97,497.70 1542.30,497.70 1560.64,497.70 C1578.97,497.70 1597.30,497.70 1615.63,497.70 C1633.96,497.70 1652.29,497.70 1670.62,497.70 C1688.95,497.70 1707.28,497.70 1725.61,497.70 C1743.95,497.70 1762.28,497.70 1780.61,497.70 C1798.94,497.70 1817.27,497.70 1835.60,497.70 L1835.60,532.60 C1817.27,532.60 1798.94,532.60 1780.61,532.60 C1762.28,532.60 1743.95,532.60 1725.61,532.60 C1707.28,532.60 1688.95,532.60 1670.62,532.60 C1652.29,532.60 1633.96,532.60 1615.63,532.60 C1597.30,532.60 1578.97,532.60 1560.64,532.60 C1542.30,532.60 1523.97,532.60 1505.64,532.60 C1487.31,532.60 1468.98,532.60 1450.65,532.60 C1432.32,532.60 1413.99,532.60 1395.66,532.60 C1377.33,532.60 1359.00,532.60 1340.66,532.60 C1322.33,532.60 1304.00,532.60 1285.67,532.60 C1267.34,532.60 1249.01,532.60 1230.68,532.60 C1212.35,532.60 1194.02,532.60 1175.69,532.60 C1157.35,532.60 1139.02,532.63 1120.69,532.70 C1102.36,532.77 1084.03,532.88 1065.70,533.00 Z" fill="#d8dee5"/>
<line x1="1066" y1="497.80" x2="1836" y2="497.80" stroke="#c5ccd4" stroke-opacity="0.42" stroke-width="1" stroke-dasharray="2.2,2.6"/>
<line x1="1066" y1="533.00" x2="1836" y2="533.00" stroke="#c5ccd4" stroke-opacity="0.42" stroke-width="1" stroke-dasharray="2.2,2.6"/>
<line x1="1066" y1="552.80" x2="1836" y2="552.80" stroke="#c5ccd4" stroke-opacity="0.42" stroke-width="1" stroke-dasharray="2.2,2.6"/>
<line x1="1066" y1="572.70" x2="1836" y2="572.70" stroke="#c5ccd4" stroke-opacity="0.42" stroke-width="1" stroke-dasharray="2.2,2.6"/>
<line x1="1066" y1="592.50" x2="1836" y2="592.50" stroke="#c5ccd4" stroke-opacity="0.42" stroke-width="1" stroke-dasharray="2.2,2.6"/>
<path d="M1065.70,587.80 C1084.03,587.77 1102.36,587.74 1120.69,587.73 C1139.02,587.71 1157.35,587.70 1175.69,587.70 C1194.02,587.70 1212.35,587.70 1230.68,587.70 C1249.01,587.70 1267.34,587.70 1285.67,587.70 C1304.00,587.70 1322.33,587.70 1340.66,587.70 C1359.00,587.70 1377.33,587.70 1395.66,587.70 C1413.99,587.70 1432.32,587.70 1450.65,587.70 C1468.98,587.70 1487.31,587.70 1505.64,587.70 C1523.97,587.70 1542.30,587.70 1560.64,587.70 C1578.97,587.70 1597.30,587.70 1615.63,587.70 C1633.96,587.70 1652.29,587.70 1670.62,587.70 C1688.95,587.70 1707.28,587.70 1725.61,587.70 C1743.95,587.70 1762.28,587.70 1780.61,587.70 C1798.94,587.70 1817.27,587.70 1835.60,587.70" fill="none" stroke="#ff6d4d" stroke-width="1"/>
<path d="M1065.70,579.30 C1084.03,579.21 1102.36,579.12 1120.69,579.08 C1139.02,579.03 1157.35,579.00 1175.69,579.00 C1194.02,579.00 1212.35,579.00 1230.68,579.00 C1249.01,579.00 1267.34,579.00 1285.67,579.00 C1304.00,579.00 1322.33,579.00 1340.66,579.00 C1359.00,579.00 1377.33,579.00 1395.66,579.00 C1413.99,579.00 1432.32,579.00 1450.65,579.00 C1468.98,579.00 1487.31,579.00 1505.64,579.00 C1523.97,579.00 1542.30,579.00 1560.64,579.00 C1578.97,579.00 1597.30,579.00 1615.63,579.00 C1633.96,579.00 1652.29,579.00 1670.62,579.00 C1688.95,579.00 1707.28,579.00 1725.61,579.00 C1743.95,579.00 1762.28,579.00 1780.61,579.00 C1798.94,579.00 1817.27,579.00 1835.60,579.00" fill="none" stroke="#9800c6" stroke-width="1"/>
<path d="M1065.70,568.20 C1084.03,568.03 1102.36,567.85 1120.69,567.75 C1139.02,567.65 1157.35,567.60 1175.69,567.60 C1194.02,567.60 1212.35,567.60 1230.68,567.60 C1249.01,567.60 1267.34,567.60 1285.67,567.60 C1304.00,567.60 1322.33,567.60 1340.66,567.60 C1359.00,567.60 1377.33,567.60 1395.66,567.60 C1413.99,567.60 1432.32,567.60 1450.65,567.60 C1468.98,567.60 1487.31,567.60 1505.64,567.60 C1523.97,567.60 1542.30,567.60 1560.64,567.60 C1578.97,567.60 1597.30,567.60 1615.63,567.60 C1633.96,567.60 1652.29,567.60 1670.62,567.60 C1688.95,567.60 1707.28,567.60 1725.61,567.60 C1743.95,567.60 1762.28,567.60 1780.61,567.60 C1798.94,567.60 1817.27,567.60 1835.60,567.60" fill="none" stroke="#a284f7" stroke-width="1"/>
<path d="M1065.70,552.20 C1084.03,552.11 1102.36,552.02 1120.69,551.97 C1139.02,551.92 1157.35,551.90 1175.69,551.90 C1194.02,551.90 1212.35,551.90 1230.68,551.90 C1249.01,551.90 1267.34,551.90 1285.67,551.90 C1304.00,551.90 1322.33,551.90 1340.66,551.90 C1359.00,551.90 1377.33,551.90 1395.66,551.90 C1413.99,551.90 1432.32,551.90 1450.65,551.90 C1468.98,551.90 1487.31,551.90 1505.64,551.90 C1523.97,551.90 1542.30,551.90 1560.64,551.90 C1578.97,551.90 1597.30,551.90 1615.63,551.90 C1633.96,551.90 1652.29,551.90 1670.62,551.90 C1688.95,551.90 1707.28,551.90 1725.61,551.90 C1743.95,551.90 1762.28,551.90 1780.61,551.90 C1798.94,551.90 1817.27,551.90 1835.60,551.90" fill="none" stroke="#58abf0" stroke-width="1"/>
<path d="M1065.70,533.00 C1084.03,532.88 1102.36,532.77 1120.69,532.70 C1139.02,532.63 1157.35,532.60 1175.69,532.60 C1194.02,532.60 1212.35,532.60 1230.68,532.60 C1249.01,532.60 1267.34,532.60 1285.67,532.60 C1304.00,532.60 1322.33,532.60 1340.66,532.60 C1359.00,532.60 1377.33,532.60 1395.66,532.60 C1413.99,532.60 1432.32,532.60 1450.65,532.60 C1468.98,532.60 1487.31,532.60 1505.64,532.60 C1523.97,532.60 1542.30,532.60 1560.64,532.60 C1578.97,532.60 1597.30,532.60 1615.63,532.60 C1633.96,532.60 1652.29,532.60 1670.62,532.60 C1688.95,532.60 1707.28,532.60 1725.61,532.60 C1743.95,532.60 1762.28,532.60 1780.61,532.60 C1798.94,532.60 1817.27,532.60 1835.60,532.60" fill="none" stroke="#3fc38a" stroke-width="1"/>
<path d="M1065.70,501.20 C1084.03,500.18 1102.36,499.16 1120.69,498.57 C1139.02,497.99 1157.35,497.70 1175.69,497.70 C1194.02,497.70 1212.35,497.70 1230.68,497.70 C1249.01,497.70 1267.34,497.70 1285.67,497.70 C1304.00,497.70 1322.33,497.70 1340.66,497.70 C1359.00,497.70 1377.33,497.70 1395.66,497.70 C1413.99,497.70 1432.32,497.70 1450.65,497.70 C1468.98,497.70 1487.31,497.70 1505.64,497.70 C1523.97,497.70 1542.30,497.70 1560.64,497.70 C1578.97,497.70 1597.30,497.70 1615.63,497.70 C1633.96,497.70 1652.29,497.70 1670.62,497.70 C1688.95,497.70 1707.28,497.70 1725.61,497.70 C1743.95,497.70 1762.28,497.70 1780.61,497.70 C1798.94,497.70 1817.27,497.70 1835.60,497.70" fill="none" stroke="#a9b8c6" stroke-width="1"/>
<line x1="1061.2" y1="497.80" x2="1064.4" y2="497.80" stroke="#e3e6ea" stroke-width="1"/>
<text x="1059.00" y="499.40" font-size="9.9" fill="#2f353b" font-weight="400" text-anchor="end" >$22M</text>
<line x1="1061.2" y1="533.00" x2="1064.4" y2="533.00" stroke="#e3e6ea" stroke-width="1"/>
<text x="1059.00" y="535.80" font-size="9.9" fill="#2f353b" font-weight="400" text-anchor="end" >$14M</text>
<line x1="1061.2" y1="552.80" x2="1064.4" y2="552.80" stroke="#e3e6ea" stroke-width="1"/>
<text x="1059.00" y="555.60" font-size="9.9" fill="#2f353b" font-weight="400" text-anchor="end" >$9.0M</text>
<line x1="1061.2" y1="572.70" x2="1064.4" y2="572.70" stroke="#e3e6ea" stroke-width="1"/>
<text x="1059.00" y="575.50" font-size="9.9" fill="#2f353b" font-weight="400" text-anchor="end" >$4.5M</text>
<line x1="1061.2" y1="592.50" x2="1064.4" y2="592.50" stroke="#e3e6ea" stroke-width="1"/>
<text x="1059.00" y="595.30" font-size="9.9" fill="#2f353b" font-weight="400" text-anchor="end" >$0</text>
<line x1="1065.70" y1="593" x2="1065.70" y2="597" stroke="#e3e6ea" stroke-width="1"/>
<line x1="1065.70" y1="593.5" x2="1065.70" y2="597.5" stroke="#e3e6ea" stroke-width="1"/>
<text x="1065.70" y="610.60" font-size="9.25" fill="#2f353b" font-weight="400" text-anchor="middle" >Feb 22</text>
<line x1="1175.69" y1="593.5" x2="1175.69" y2="597.5" stroke="#e3e6ea" stroke-width="1"/>
<text x="1175.69" y="610.60" font-size="9.25" fill="#2f353b" font-weight="400" text-anchor="middle" >Apr 22</text>
<line x1="1285.67" y1="593.5" x2="1285.67" y2="597.5" stroke="#e3e6ea" stroke-width="1"/>
<text x="1285.67" y="610.60" font-size="9.25" fill="#2f353b" font-weight="400" text-anchor="middle" >Jun 22</text>
<line x1="1395.66" y1="593.5" x2="1395.66" y2="597.5" stroke="#e3e6ea" stroke-width="1"/>
<text x="1395.66" y="610.60" font-size="9.25" fill="#2f353b" font-weight="400" text-anchor="middle" >Aug 22</text>
<line x1="1505.64" y1="593.5" x2="1505.64" y2="597.5" stroke="#e3e6ea" stroke-width="1"/>
<text x="1505.64" y="610.60" font-size="9.25" fill="#2f353b" font-weight="400" text-anchor="middle" >Oct 22</text>
<line x1="1615.63" y1="593.5" x2="1615.63" y2="597.5" stroke="#e3e6ea" stroke-width="1"/>
<text x="1615.63" y="610.60" font-size="9.25" fill="#2f353b" font-weight="400" text-anchor="middle" >Dec 22</text>
<line x1="1725.61" y1="593.5" x2="1725.61" y2="597.5" stroke="#e3e6ea" stroke-width="1"/>
<text x="1725.61" y="610.60" font-size="9.25" fill="#2f353b" font-weight="400" text-anchor="middle" >Feb 23</text>
<line x1="1835.60" y1="593.5" x2="1835.60" y2="597.5" stroke="#e3e6ea" stroke-width="1"/>
<text x="1843.80" y="610.60" font-size="9.25" fill="#2f353b" font-weight="400" text-anchor="end" >Apr 23</text>
<rect x="1001.5" y="675.5" width="881" height="224" rx="7" fill="#fff" stroke="#e1e2e4" stroke-width="1"/>
<text x="1021.70" y="708.00" font-size="11.6" fill="#30363c" font-weight="400" text-anchor="start" stroke="#30363c" stroke-width="0.25" textLength="100.4" lengthAdjust="spacingAndGlyphs">Headcount by Dept</text>
<circle cx="1854.3" cy="699.30" r="1.75" fill="#1c1f23"/>
<circle cx="1854.3" cy="705.00" r="1.75" fill="#1c1f23"/>
<circle cx="1854.3" cy="710.70" r="1.75" fill="#1c1f23"/>
<path d="M1046.60,836.20 C1065.39,836.20 1084.18,836.20 1102.96,836.20 C1121.75,836.20 1140.54,835.73 1159.33,835.71 C1178.12,835.69 1196.90,835.69 1215.69,835.68 C1234.48,835.67 1253.27,835.66 1272.06,835.65 C1290.85,835.65 1309.63,835.64 1328.42,835.64 C1347.21,835.64 1366.00,835.63 1384.79,835.63 C1403.57,835.63 1422.36,835.63 1441.15,835.62 C1459.94,835.62 1478.73,835.62 1497.51,835.62 C1516.30,835.62 1535.09,835.62 1553.88,835.62 C1572.67,835.62 1591.45,835.62 1610.24,835.62 C1629.03,835.62 1647.82,835.62 1666.61,835.61 C1685.40,835.61 1704.18,835.61 1722.97,835.61 C1741.76,835.61 1760.55,835.61 1779.34,835.61 C1798.12,835.61 1816.91,835.61 1835.70,835.61 L1835.70,836.20 C1816.91,836.20 1798.12,836.20 1779.34,836.20 C1760.55,836.20 1741.76,836.20 1722.97,836.20 C1704.18,836.20 1685.40,836.20 1666.61,836.20 C1647.82,836.20 1629.03,836.20 1610.24,836.20 C1591.45,836.20 1572.67,836.20 1553.88,836.20 C1535.09,836.20 1516.30,836.20 1497.51,836.20 C1478.73,836.20 1459.94,836.20 1441.15,836.20 C1422.36,836.20 1403.57,836.20 1384.79,836.20 C1366.00,836.20 1347.21,836.20 1328.42,836.20 C1309.63,836.20 1290.85,836.20 1272.06,836.20 C1253.27,836.20 1234.48,836.20 1215.69,836.20 C1196.90,836.20 1178.12,836.20 1159.33,836.20 C1140.54,836.20 1121.75,836.20 1102.96,836.20 C1084.18,836.20 1065.39,836.20 1046.60,836.20 Z" fill="#8f73f5"/>
<path d="M1046.60,836.20 C1065.39,836.20 1084.18,836.20 1102.96,836.20 C1121.75,836.20 1140.54,834.94 1159.33,834.88 C1178.12,834.82 1196.90,834.82 1215.69,834.79 C1234.48,834.77 1253.27,834.75 1272.06,834.74 C1290.85,834.72 1309.63,834.71 1328.42,834.70 C1347.21,834.69 1366.00,834.68 1384.79,834.68 C1403.57,834.67 1422.36,834.67 1441.15,834.66 C1459.94,834.66 1478.73,834.66 1497.51,834.65 C1516.30,834.65 1535.09,834.65 1553.88,834.65 C1572.67,834.64 1591.45,834.64 1610.24,834.64 C1629.03,834.64 1647.82,834.64 1666.61,834.64 C1685.40,834.64 1704.18,834.64 1722.97,834.64 C1741.76,834.64 1760.55,834.64 1779.34,834.64 C1798.12,834.64 1816.91,834.64 1835.70,834.64 L1835.70,835.61 C1816.91,835.61 1798.12,835.61 1779.34,835.61 C1760.55,835.61 1741.76,835.61 1722.97,835.61 C1704.18,835.61 1685.40,835.61 1666.61,835.61 C1647.82,835.62 1629.03,835.62 1610.24,835.62 C1591.45,835.62 1572.67,835.62 1553.88,835.62 C1535.09,835.62 1516.30,835.62 1497.51,835.62 C1478.73,835.62 1459.94,835.62 1441.15,835.62 C1422.36,835.63 1403.57,835.63 1384.79,835.63 C1366.00,835.63 1347.21,835.64 1328.42,835.64 C1309.63,835.64 1290.85,835.65 1272.06,835.65 C1253.27,835.66 1234.48,835.67 1215.69,835.68 C1196.90,835.69 1178.12,835.69 1159.33,835.71 C1140.54,835.73 1121.75,836.20 1102.96,836.20 C1084.18,836.20 1065.39,836.20 1046.60,836.20 Z" fill="#ff5f5f"/>
<path d="M1046.60,834.15 C1065.39,834.24 1084.18,834.34 1102.96,834.34 C1121.75,834.34 1140.54,831.79 1159.33,831.70 C1178.12,831.61 1196.90,831.60 1215.69,831.56 C1234.48,831.52 1253.27,831.50 1272.06,831.47 C1290.85,831.45 1309.63,831.43 1328.42,831.42 C1347.21,831.40 1366.00,831.39 1384.79,831.38 C1403.57,831.37 1422.36,831.36 1441.15,831.35 C1459.94,831.35 1478.73,831.34 1497.51,831.34 C1516.30,831.33 1535.09,831.33 1553.88,831.33 C1572.67,831.32 1591.45,831.32 1610.24,831.32 C1629.03,831.32 1647.82,831.32 1666.61,831.32 C1685.40,831.31 1704.18,831.31 1722.97,831.31 C1741.76,831.31 1760.55,831.31 1779.34,831.31 C1798.12,831.31 1816.91,831.31 1835.70,831.31 L1835.70,834.64 C1816.91,834.64 1798.12,834.64 1779.34,834.64 C1760.55,834.64 1741.76,834.64 1722.97,834.64 C1704.18,834.64 1685.40,834.64 1666.61,834.64 C1647.82,834.64 1629.03,834.64 1610.24,834.64 C1591.45,834.64 1572.67,834.64 1553.88,834.65 C1535.09,834.65 1516.30,834.65 1497.51,834.65 C1478.73,834.66 1459.94,834.66 1441.15,834.66 C1422.36,834.67 1403.57,834.67 1384.79,834.68 C1366.00,834.68 1347.21,834.69 1328.42,834.70 C1309.63,834.71 1290.85,834.72 1272.06,834.74 C1253.27,834.75 1234.48,834.77 1215.69,834.79 C1196.90,834.82 1178.12,834.82 1159.33,834.88 C1140.54,834.94 1121.75,836.20 1102.96,836.20 C1084.18,836.20 1065.39,836.20 1046.60,836.20 Z" fill="#ffc24f"/>
<path d="M1046.60,833.80 C1065.39,833.80 1084.18,833.80 1102.96,833.80 C1121.75,833.80 1140.54,829.71 1159.33,829.40 C1178.12,829.09 1196.90,829.06 1215.69,828.94 C1234.48,828.81 1253.27,828.72 1272.06,828.64 C1290.85,828.55 1309.63,828.50 1328.42,828.44 C1347.21,828.39 1366.00,828.35 1384.79,828.32 C1403.57,828.28 1422.36,828.26 1441.15,828.23 C1459.94,828.21 1478.73,828.19 1497.51,828.18 C1516.30,828.16 1535.09,828.15 1553.88,828.14 C1572.67,828.13 1591.45,828.13 1610.24,828.12 C1629.03,828.12 1647.82,828.11 1666.61,828.11 C1685.40,828.10 1704.18,828.10 1722.97,828.10 C1741.76,828.09 1760.55,828.09 1779.34,828.09 C1798.12,828.09 1816.91,828.09 1835.70,828.09 L1835.70,831.31 C1816.91,831.31 1798.12,831.31 1779.34,831.31 C1760.55,831.31 1741.76,831.31 1722.97,831.31 C1704.18,831.31 1685.40,831.31 1666.61,831.32 C1647.82,831.32 1629.03,831.32 1610.24,831.32 C1591.45,831.32 1572.67,831.32 1553.88,831.33 C1535.09,831.33 1516.30,831.33 1497.51,831.34 C1478.73,831.34 1459.94,831.35 1441.15,831.35 C1422.36,831.36 1403.57,831.37 1384.79,831.38 C1366.00,831.39 1347.21,831.40 1328.42,831.42 C1309.63,831.43 1290.85,831.45 1272.06,831.47 C1253.27,831.50 1234.48,831.52 1215.69,831.56 C1196.90,831.60 1178.12,831.61 1159.33,831.70 C1140.54,831.79 1121.75,834.34 1102.96,834.34 C1084.18,834.34 1065.39,834.24 1046.60,834.15 Z" fill="#ffd0a2"/>
<path d="M1046.60,830.72 C1065.39,830.92 1084.18,831.11 1102.96,831.11 C1121.75,831.11 1140.54,820.68 1159.33,820.40 C1178.12,820.11 1196.90,820.09 1215.69,819.97 C1234.48,819.85 1253.27,819.77 1272.06,819.69 C1290.85,819.62 1309.63,819.56 1328.42,819.51 C1347.21,819.46 1366.00,819.43 1384.79,819.39 C1403.57,819.36 1422.36,819.34 1441.15,819.32 C1459.94,819.30 1478.73,819.28 1497.51,819.27 C1516.30,819.25 1535.09,819.24 1553.88,819.24 C1572.67,819.23 1591.45,819.22 1610.24,819.21 C1629.03,819.21 1647.82,819.20 1666.61,819.20 C1685.40,819.20 1704.18,819.19 1722.97,819.19 C1741.76,819.19 1760.55,819.19 1779.34,819.19 C1798.12,819.18 1816.91,819.18 1835.70,819.18 L1835.70,828.09 C1816.91,828.09 1798.12,828.09 1779.34,828.09 C1760.55,828.09 1741.76,828.09 1722.97,828.10 C1704.18,828.10 1685.40,828.10 1666.61,828.11 C1647.82,828.11 1629.03,828.12 1610.24,828.12 C1591.45,828.13 1572.67,828.13 1553.88,828.14 C1535.09,828.15 1516.30,828.16 1497.51,828.18 C1478.73,828.19 1459.94,828.21 1441.15,828.23 C1422.36,828.26 1403.57,828.28 1384.79,828.32 C1366.00,828.35 1347.21,828.39 1328.42,828.44 C1309.63,828.50 1290.85,828.55 1272.06,828.64 C1253.27,828.72 1234.48,828.81 1215.69,828.94 C1196.90,829.06 1178.12,829.09 1159.33,829.40 C1140.54,829.71 1121.75,833.80 1102.96,833.80 C1084.18,833.80 1065.39,833.80 1046.60,833.80 Z" fill="#8de1bb"/>
<path d="M1046.60,827.30 C1065.39,827.64 1084.18,827.98 1102.96,827.98 C1121.75,827.98 1140.54,812.24 1159.33,811.89 C1178.12,811.54 1196.90,811.51 1215.69,811.36 C1234.48,811.21 1253.27,811.08 1272.06,810.97 C1290.85,810.85 1309.63,810.76 1328.42,810.67 C1347.21,810.58 1366.00,810.51 1384.79,810.45 C1403.57,810.38 1422.36,810.33 1441.15,810.28 C1459.94,810.23 1478.73,810.19 1497.51,810.16 C1516.30,810.12 1535.09,810.09 1553.88,810.06 C1572.67,810.04 1591.45,810.01 1610.24,809.99 C1629.03,809.97 1647.82,809.96 1666.61,809.94 C1685.40,809.93 1704.18,809.91 1722.97,809.90 C1741.76,809.89 1760.55,809.88 1779.34,809.87 C1798.12,809.86 1816.91,809.86 1835.70,809.85 L1835.70,819.18 C1816.91,819.18 1798.12,819.18 1779.34,819.19 C1760.55,819.19 1741.76,819.19 1722.97,819.19 C1704.18,819.19 1685.40,819.20 1666.61,819.20 C1647.82,819.20 1629.03,819.21 1610.24,819.21 C1591.45,819.22 1572.67,819.23 1553.88,819.24 C1535.09,819.24 1516.30,819.25 1497.51,819.27 C1478.73,819.28 1459.94,819.30 1441.15,819.32 C1422.36,819.34 1403.57,819.36 1384.79,819.39 C1366.00,819.43 1347.21,819.46 1328.42,819.51 C1309.63,819.56 1290.85,819.62 1272.06,819.69 C1253.27,819.77 1234.48,819.85 1215.69,819.97 C1196.90,820.09 1178.12,820.11 1159.33,820.40 C1140.54,820.68 1121.75,831.11 1102.96,831.11 C1084.18,831.11 1065.39,830.92 1046.60,830.72 Z" fill="#d3c2fb"/>
<path d="M1046.60,825.93 C1065.39,826.32 1084.18,826.71 1102.96,826.71 C1121.75,826.71 1140.54,801.58 1159.33,801.17 C1178.12,800.77 1196.90,800.74 1215.69,800.57 C1234.48,800.40 1253.27,800.26 1272.06,800.14 C1290.85,800.01 1309.63,799.91 1328.42,799.82 C1347.21,799.73 1366.00,799.66 1384.79,799.60 C1403.57,799.53 1422.36,799.48 1441.15,799.44 C1459.94,799.39 1478.73,799.35 1497.51,799.32 C1516.30,799.29 1535.09,799.26 1553.88,799.24 C1572.67,799.21 1591.45,799.19 1610.24,799.18 C1629.03,799.16 1647.82,799.15 1666.61,799.13 C1685.40,799.12 1704.18,799.11 1722.97,799.10 C1741.76,799.09 1760.55,799.09 1779.34,799.08 C1798.12,799.07 1816.91,799.07 1835.70,799.06 L1835.70,809.85 C1816.91,809.86 1798.12,809.86 1779.34,809.87 C1760.55,809.88 1741.76,809.89 1722.97,809.90 C1704.18,809.91 1685.40,809.93 1666.61,809.94 C1647.82,809.96 1629.03,809.97 1610.24,809.99 C1591.45,810.01 1572.67,810.04 1553.88,810.06 C1535.09,810.09 1516.30,810.12 1497.51,810.16 C1478.73,810.19 1459.94,810.23 1441.15,810.28 C1422.36,810.33 1403.57,810.38 1384.79,810.45 C1366.00,810.51 1347.21,810.58 1328.42,810.67 C1309.63,810.76 1290.85,810.85 1272.06,810.97 C1253.27,811.08 1234.48,811.21 1215.69,811.36 C1196.90,811.51 1178.12,811.54 1159.33,811.89 C1140.54,812.24 1121.75,827.98 1102.96,827.98 C1084.18,827.98 1065.39,827.64 1046.60,827.30 Z" fill="#93ccf3"/>
<path d="M1046.60,820.79 C1065.39,821.16 1084.18,821.52 1102.96,821.52 C1121.75,821.52 1140.54,777.04 1159.33,776.18 C1178.12,775.31 1196.90,775.24 1215.69,774.88 C1234.48,774.51 1253.27,774.24 1272.06,773.99 C1290.85,773.74 1309.63,773.56 1328.42,773.39 C1347.21,773.22 1366.00,773.10 1384.79,772.98 C1403.57,772.87 1422.36,772.78 1441.15,772.71 C1459.94,772.63 1478.73,772.57 1497.51,772.52 C1516.30,772.46 1535.09,772.42 1553.88,772.39 C1572.67,772.35 1591.45,772.32 1610.24,772.30 C1629.03,772.28 1647.82,772.26 1666.61,772.24 C1685.40,772.22 1704.18,772.21 1722.97,772.20 C1741.76,772.19 1760.55,772.18 1779.34,772.17 C1798.12,772.17 1816.91,772.16 1835.70,772.15 L1835.70,799.06 C1816.91,799.07 1798.12,799.07 1779.34,799.08 C1760.55,799.09 1741.76,799.09 1722.97,799.10 C1704.18,799.11 1685.40,799.12 1666.61,799.13 C1647.82,799.15 1629.03,799.16 1610.24,799.18 C1591.45,799.19 1572.67,799.21 1553.88,799.24 C1535.09,799.26 1516.30,799.29 1497.51,799.32 C1478.73,799.35 1459.94,799.39 1441.15,799.44 C1422.36,799.48 1403.57,799.53 1384.79,799.60 C1366.00,799.66 1347.21,799.73 1328.42,799.82 C1309.63,799.91 1290.85,800.01 1272.06,800.14 C1253.27,800.26 1234.48,800.40 1215.69,800.57 C1196.90,800.74 1178.12,800.77 1159.33,801.17 C1140.54,801.58 1121.75,826.71 1102.96,826.71 C1084.18,826.71 1065.39,826.32 1046.60,825.93 Z" fill="#d9dfe6"/>
<path d="M1046.60,816.29 C1065.39,816.85 1084.18,817.41 1102.96,817.41 C1121.75,817.41 1140.54,745.64 1159.33,744.72 C1178.12,743.80 1196.90,743.73 1215.69,743.34 C1234.48,742.96 1253.27,742.67 1272.06,742.41 C1290.85,742.14 1309.63,741.95 1328.42,741.77 C1347.21,741.59 1366.00,741.46 1384.79,741.34 C1403.57,741.21 1422.36,741.12 1441.15,741.04 C1459.94,740.96 1478.73,740.90 1497.51,740.84 C1516.30,740.78 1535.09,740.74 1553.88,740.70 C1572.67,740.67 1591.45,740.64 1610.24,740.61 C1629.03,740.59 1647.82,740.57 1666.61,740.55 C1685.40,740.53 1704.18,740.52 1722.97,740.51 C1741.76,740.49 1760.55,740.48 1779.34,740.48 C1798.12,740.47 1816.91,740.46 1835.70,740.46 L1835.70,772.15 C1816.91,772.16 1798.12,772.17 1779.34,772.17 C1760.55,772.18 1741.76,772.19 1722.97,772.20 C1704.18,772.21 1685.40,772.22 1666.61,772.24 C1647.82,772.26 1629.03,772.28 1610.24,772.30 C1591.45,772.32 1572.67,772.35 1553.88,772.39 C1535.09,772.42 1516.30,772.46 1497.51,772.52 C1478.73,772.57 1459.94,772.63 1441.15,772.71 C1422.36,772.78 1403.57,772.87 1384.79,772.98 C1366.00,773.10 1347.21,773.22 1328.42,773.39 C1309.63,773.56 1290.85,773.74 1272.06,773.99 C1253.27,774.24 1234.48,774.51 1215.69,774.88 C1196.90,775.24 1178.12,775.31 1159.33,776.18 C1140.54,777.04 1121.75,821.52 1102.96,821.52 C1084.18,821.52 1065.39,821.16 1046.60,820.79 Z" fill="#8de1bb"/>
<line x1="1047" y1="740.60" x2="1836" y2="740.60" stroke="#c5ccd4" stroke-opacity="0.42" stroke-width="1" stroke-dasharray="2.2,2.6"/>
<line x1="1047" y1="777.30" x2="1836" y2="777.30" stroke="#c5ccd4" stroke-opacity="0.42" stroke-width="1" stroke-dasharray="2.2,2.6"/>
<line x1="1047" y1="797.00" x2="1836" y2="797.00" stroke="#c5ccd4" stroke-opacity="0.42" stroke-width="1" stroke-dasharray="2.2,2.6"/>
<line x1="1047" y1="816.30" x2="1836" y2="816.30" stroke="#c5ccd4" stroke-opacity="0.42" stroke-width="1" stroke-dasharray="2.2,2.6"/>
<line x1="1047" y1="836.10" x2="1836" y2="836.10" stroke="#c5ccd4" stroke-opacity="0.42" stroke-width="1" stroke-dasharray="2.2,2.6"/>
<path d="M1046.60,836.20 C1065.39,836.20 1084.18,836.20 1102.96,836.20 C1121.75,836.20 1140.54,835.73 1159.33,835.71 C1178.12,835.69 1196.90,835.69 1215.69,835.68 C1234.48,835.67 1253.27,835.66 1272.06,835.65 C1290.85,835.65 1309.63,835.64 1328.42,835.64 C1347.21,835.64 1366.00,835.63 1384.79,835.63 C1403.57,835.63 1422.36,835.63 1441.15,835.62 C1459.94,835.62 1478.73,835.62 1497.51,835.62 C1516.30,835.62 1535.09,835.62 1553.88,835.62 C1572.67,835.62 1591.45,835.62 1610.24,835.62 C1629.03,835.62 1647.82,835.62 1666.61,835.61 C1685.40,835.61 1704.18,835.61 1722.97,835.61 C1741.76,835.61 1760.55,835.61 1779.34,835.61 C1798.12,835.61 1816.91,835.61 1835.70,835.61" fill="none" stroke="none" stroke-width="1"/>
<path d="M1046.60,836.20 C1065.39,836.20 1084.18,836.20 1102.96,836.20 C1121.75,836.20 1140.54,834.94 1159.33,834.88 C1178.12,834.82 1196.90,834.82 1215.69,834.79 C1234.48,834.77 1253.27,834.75 1272.06,834.74 C1290.85,834.72 1309.63,834.71 1328.42,834.70 C1347.21,834.69 1366.00,834.68 1384.79,834.68 C1403.57,834.67 1422.36,834.67 1441.15,834.66 C1459.94,834.66 1478.73,834.66 1497.51,834.65 C1516.30,834.65 1535.09,834.65 1553.88,834.65 C1572.67,834.64 1591.45,834.64 1610.24,834.64 C1629.03,834.64 1647.82,834.64 1666.61,834.64 C1685.40,834.64 1704.18,834.64 1722.97,834.64 C1741.76,834.64 1760.55,834.64 1779.34,834.64 C1798.12,834.64 1816.91,834.64 1835.70,834.64" fill="none" stroke="none" stroke-width="1"/>
<path d="M1046.60,834.15 C1065.39,834.24 1084.18,834.34 1102.96,834.34 C1121.75,834.34 1140.54,831.79 1159.33,831.70 C1178.12,831.61 1196.90,831.60 1215.69,831.56 C1234.48,831.52 1253.27,831.50 1272.06,831.47 C1290.85,831.45 1309.63,831.43 1328.42,831.42 C1347.21,831.40 1366.00,831.39 1384.79,831.38 C1403.57,831.37 1422.36,831.36 1441.15,831.35 C1459.94,831.35 1478.73,831.34 1497.51,831.34 C1516.30,831.33 1535.09,831.33 1553.88,831.33 C1572.67,831.32 1591.45,831.32 1610.24,831.32 C1629.03,831.32 1647.82,831.32 1666.61,831.32 C1685.40,831.31 1704.18,831.31 1722.97,831.31 C1741.76,831.31 1760.55,831.31 1779.34,831.31 C1798.12,831.31 1816.91,831.31 1835.70,831.31" fill="none" stroke="#ffb02e" stroke-width="1"/>
<path d="M1046.60,833.80 C1065.39,833.80 1084.18,833.80 1102.96,833.80 C1121.75,833.80 1140.54,829.71 1159.33,829.40 C1178.12,829.09 1196.90,829.06 1215.69,828.94 C1234.48,828.81 1253.27,828.72 1272.06,828.64 C1290.85,828.55 1309.63,828.50 1328.42,828.44 C1347.21,828.39 1366.00,828.35 1384.79,828.32 C1403.57,828.28 1422.36,828.26 1441.15,828.23 C1459.94,828.21 1478.73,828.19 1497.51,828.18 C1516.30,828.16 1535.09,828.15 1553.88,828.14 C1572.67,828.13 1591.45,828.13 1610.24,828.12 C1629.03,828.12 1647.82,828.11 1666.61,828.11 C1685.40,828.10 1704.18,828.10 1722.97,828.10 C1741.76,828.09 1760.55,828.09 1779.34,828.09 C1798.12,828.09 1816.91,828.09 1835.70,828.09" fill="none" stroke="#ffb877" stroke-width="1"/>
<path d="M1046.60,830.72 C1065.39,830.92 1084.18,831.11 1102.96,831.11 C1121.75,831.11 1140.54,820.68 1159.33,820.40 C1178.12,820.11 1196.90,820.09 1215.69,819.97 C1234.48,819.85 1253.27,819.77 1272.06,819.69 C1290.85,819.62 1309.63,819.56 1328.42,819.51 C1347.21,819.46 1366.00,819.43 1384.79,819.39 C1403.57,819.36 1422.36,819.34 1441.15,819.32 C1459.94,819.30 1478.73,819.28 1497.51,819.27 C1516.30,819.25 1535.09,819.24 1553.88,819.24 C1572.67,819.23 1591.45,819.22 1610.24,819.21 C1629.03,819.21 1647.82,819.20 1666.61,819.20 C1685.40,819.20 1704.18,819.19 1722.97,819.19 C1741.76,819.19 1760.55,819.19 1779.34,819.19 C1798.12,819.18 1816.91,819.18 1835.70,819.18" fill="none" stroke="#3ec48a" stroke-width="1"/>
<path d="M1046.60,827.30 C1065.39,827.64 1084.18,827.98 1102.96,827.98 C1121.75,827.98 1140.54,812.24 1159.33,811.89 C1178.12,811.54 1196.90,811.51 1215.69,811.36 C1234.48,811.21 1253.27,811.08 1272.06,810.97 C1290.85,810.85 1309.63,810.76 1328.42,810.67 C1347.21,810.58 1366.00,810.51 1384.79,810.45 C1403.57,810.38 1422.36,810.33 1441.15,810.28 C1459.94,810.23 1478.73,810.19 1497.51,810.16 C1516.30,810.12 1535.09,810.09 1553.88,810.06 C1572.67,810.04 1591.45,810.01 1610.24,809.99 C1629.03,809.97 1647.82,809.96 1666.61,809.94 C1685.40,809.93 1704.18,809.91 1722.97,809.90 C1741.76,809.89 1760.55,809.88 1779.34,809.87 C1798.12,809.86 1816.91,809.86 1835.70,809.85" fill="none" stroke="#a383f7" stroke-width="1"/>
<path d="M1046.60,825.93 C1065.39,826.32 1084.18,826.71 1102.96,826.71 C1121.75,826.71 1140.54,801.58 1159.33,801.17 C1178.12,800.77 1196.90,800.74 1215.69,800.57 C1234.48,800.40 1253.27,800.26 1272.06,800.14 C1290.85,800.01 1309.63,799.91 1328.42,799.82 C1347.21,799.73 1366.00,799.66 1384.79,799.60 C1403.57,799.53 1422.36,799.48 1441.15,799.44 C1459.94,799.39 1478.73,799.35 1497.51,799.32 C1516.30,799.29 1535.09,799.26 1553.88,799.24 C1572.67,799.21 1591.45,799.19 1610.24,799.18 C1629.03,799.16 1647.82,799.15 1666.61,799.13 C1685.40,799.12 1704.18,799.11 1722.97,799.10 C1741.76,799.09 1760.55,799.09 1779.34,799.08 C1798.12,799.07 1816.91,799.07 1835.70,799.06" fill="none" stroke="#55a9ef" stroke-width="1"/>
<path d="M1046.60,820.79 C1065.39,821.16 1084.18,821.52 1102.96,821.52 C1121.75,821.52 1140.54,777.04 1159.33,776.18 C1178.12,775.31 1196.90,775.24 1215.69,774.88 C1234.48,774.51 1253.27,774.24 1272.06,773.99 C1290.85,773.74 1309.63,773.56 1328.42,773.39 C1347.21,773.22 1366.00,773.10 1384.79,772.98 C1403.57,772.87 1422.36,772.78 1441.15,772.71 C1459.94,772.63 1478.73,772.57 1497.51,772.52 C1516.30,772.46 1535.09,772.42 1553.88,772.39 C1572.67,772.35 1591.45,772.32 1610.24,772.30 C1629.03,772.28 1647.82,772.26 1666.61,772.24 C1685.40,772.22 1704.18,772.21 1722.97,772.20 C1741.76,772.19 1760.55,772.18 1779.34,772.17 C1798.12,772.17 1816.91,772.16 1835.70,772.15" fill="none" stroke="#c6d0da" stroke-width="1"/>
<path d="M1046.60,816.29 C1065.39,816.85 1084.18,817.41 1102.96,817.41 C1121.75,817.41 1140.54,745.64 1159.33,744.72 C1178.12,743.80 1196.90,743.73 1215.69,743.34 C1234.48,742.96 1253.27,742.67 1272.06,742.41 C1290.85,742.14 1309.63,741.95 1328.42,741.77 C1347.21,741.59 1366.00,741.46 1384.79,741.34 C1403.57,741.21 1422.36,741.12 1441.15,741.04 C1459.94,740.96 1478.73,740.90 1497.51,740.84 C1516.30,740.78 1535.09,740.74 1553.88,740.70 C1572.67,740.67 1591.45,740.64 1610.24,740.61 C1629.03,740.59 1647.82,740.57 1666.61,740.55 C1685.40,740.53 1704.18,740.52 1722.97,740.51 C1741.76,740.49 1760.55,740.48 1779.34,740.48 C1798.12,740.47 1816.91,740.46 1835.70,740.46" fill="none" stroke="#33c47f" stroke-width="1.5"/>
<line x1="1046.60" y1="740.6" x2="1046.60" y2="836.2" stroke="#e3e6ea" stroke-width="1"/>
<line x1="1041.6" y1="740.60" x2="1045.0" y2="740.60" stroke="#e3e6ea" stroke-width="1"/>
<text x="1039.70" y="742.90" font-size="9.9" fill="#2f353b" font-weight="400" text-anchor="end" >196</text>
<line x1="1041.6" y1="777.30" x2="1045.0" y2="777.30" stroke="#e3e6ea" stroke-width="1"/>
<text x="1039.70" y="779.60" font-size="9.9" fill="#2f353b" font-weight="400" text-anchor="end" >120</text>
<line x1="1041.6" y1="797.00" x2="1045.0" y2="797.00" stroke="#e3e6ea" stroke-width="1"/>
<text x="1039.70" y="799.30" font-size="9.9" fill="#2f353b" font-weight="400" text-anchor="end" >80</text>
<line x1="1041.6" y1="816.30" x2="1045.0" y2="816.30" stroke="#e3e6ea" stroke-width="1"/>
<text x="1039.70" y="818.60" font-size="9.9" fill="#2f353b" font-weight="400" text-anchor="end" >40</text>
<line x1="1041.6" y1="836.10" x2="1045.0" y2="836.10" stroke="#e3e6ea" stroke-width="1"/>
<text x="1039.70" y="838.40" font-size="9.9" fill="#2f353b" font-weight="400" text-anchor="end" >0</text>
<line x1="1046.60" y1="836.6" x2="1046.60" y2="840.6" stroke="#e3e6ea" stroke-width="1"/>
<text x="1037.90" y="853.80" font-size="9.25" fill="#2f353b" font-weight="400" text-anchor="start" >Feb 22</text>
<line x1="1159.33" y1="836.6" x2="1159.33" y2="840.6" stroke="#e3e6ea" stroke-width="1"/>
<text x="1159.33" y="853.80" font-size="9.25" fill="#2f353b" font-weight="400" text-anchor="middle" >Apr 22</text>
<line x1="1272.06" y1="836.6" x2="1272.06" y2="840.6" stroke="#e3e6ea" stroke-width="1"/>
<text x="1272.06" y="853.80" font-size="9.25" fill="#2f353b" font-weight="400" text-anchor="middle" >Jun 22</text>
<line x1="1384.79" y1="836.6" x2="1384.79" y2="840.6" stroke="#e3e6ea" stroke-width="1"/>
<text x="1384.79" y="853.80" font-size="9.25" fill="#2f353b" font-weight="400" text-anchor="middle" >Aug 22</text>
<line x1="1497.51" y1="836.6" x2="1497.51" y2="840.6" stroke="#e3e6ea" stroke-width="1"/>
<text x="1497.51" y="853.80" font-size="9.25" fill="#2f353b" font-weight="400" text-anchor="middle" >Oct 22</text>
<line x1="1610.24" y1="836.6" x2="1610.24" y2="840.6" stroke="#e3e6ea" stroke-width="1"/>
<text x="1610.24" y="853.80" font-size="9.25" fill="#2f353b" font-weight="400" text-anchor="middle" >Dec 22</text>
<line x1="1722.97" y1="836.6" x2="1722.97" y2="840.6" stroke="#e3e6ea" stroke-width="1"/>
<text x="1722.97" y="853.80" font-size="9.25" fill="#2f353b" font-weight="400" text-anchor="middle" >Feb 23</text>
<line x1="1835.70" y1="836.6" x2="1835.70" y2="840.6" stroke="#e3e6ea" stroke-width="1"/>
<text x="1844.00" y="853.80" font-size="9.25" fill="#2f353b" font-weight="400" text-anchor="end" >Apr 23</text>
</svg></body></html>
